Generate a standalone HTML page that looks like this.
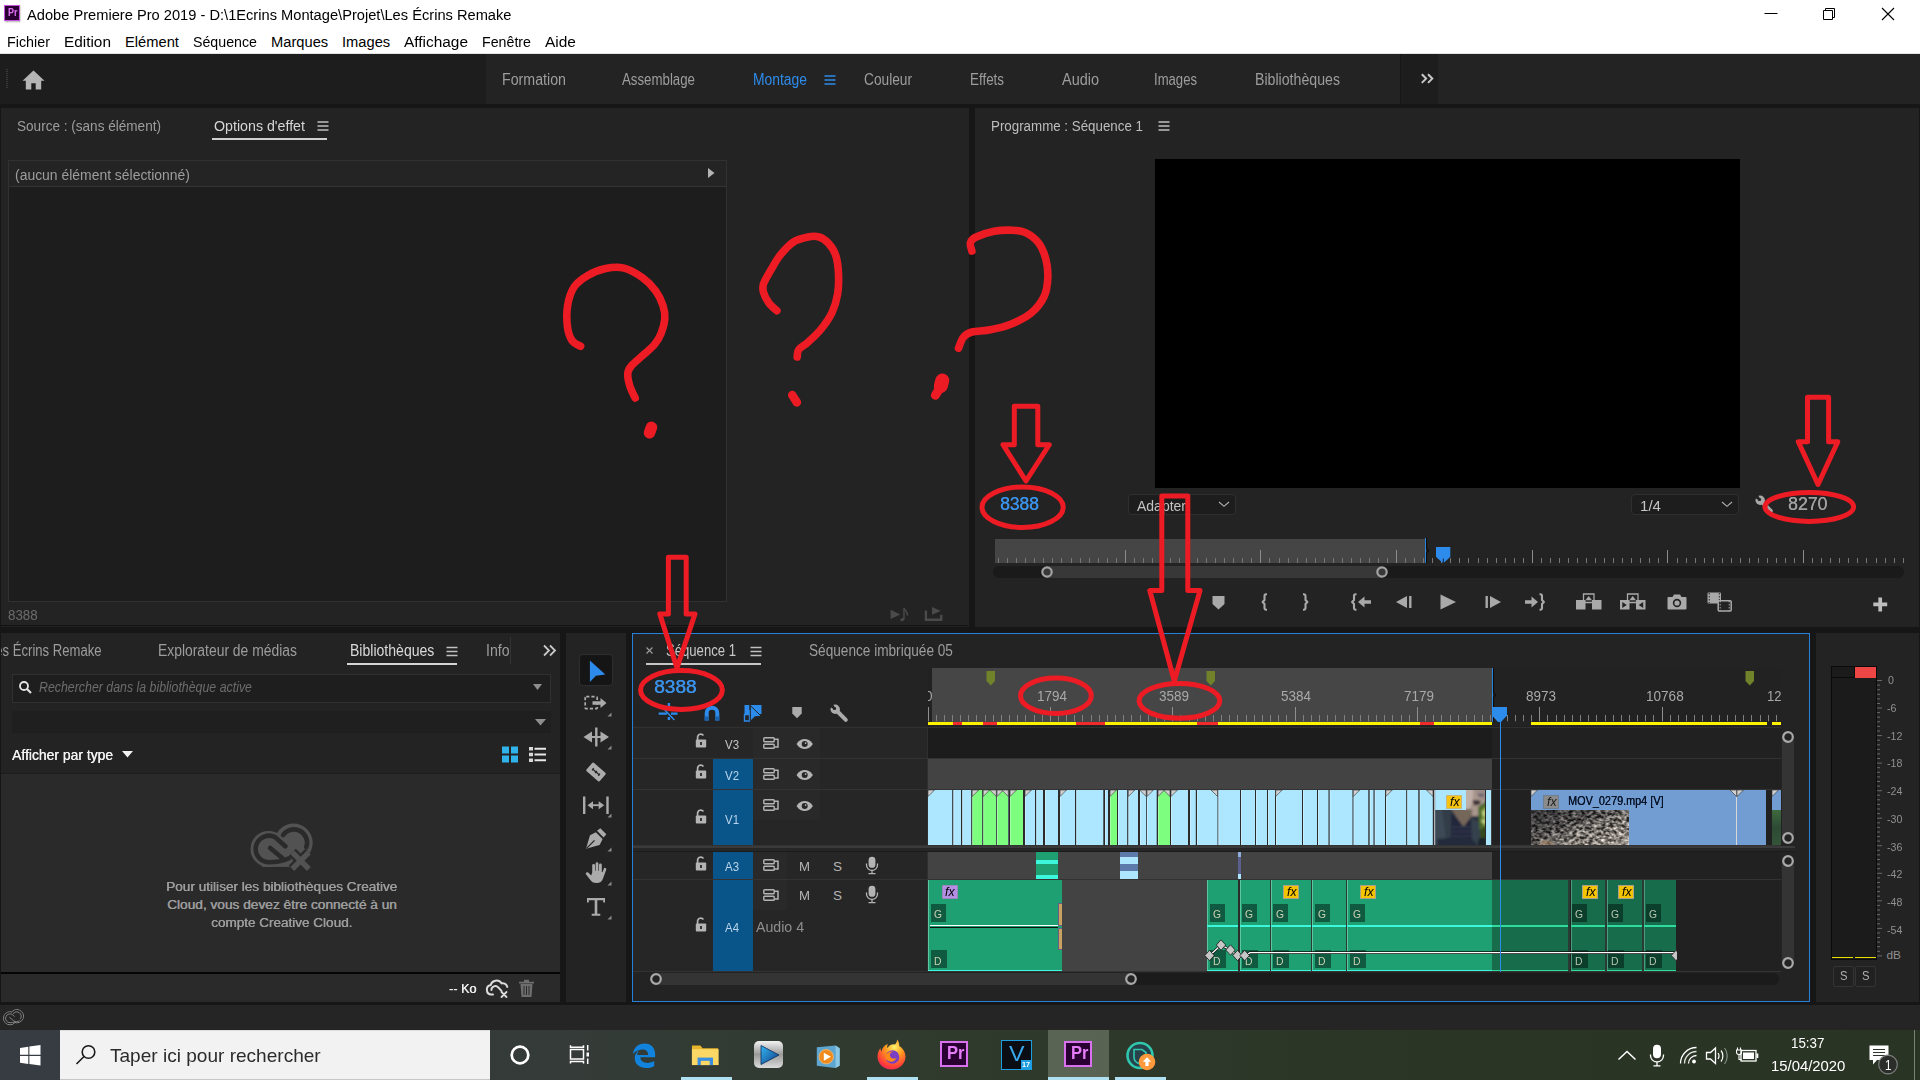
<!DOCTYPE html>
<html lang="fr"><head><meta charset="utf-8"><title>Adobe Premiere Pro 2019</title><style>
html,body{margin:0;padding:0;}
body{width:1920px;height:1080px;overflow:hidden;background:#161616;position:relative;font-family:"Liberation Sans",sans-serif;}
div,span,svg{position:absolute;box-sizing:border-box;}
.t{white-space:pre;transform-origin:0 50%;}
</style></head><body>
<div style="left:0px;top:0px;width:1920px;height:54px;background:#ffffff;"></div>
<div style="left:0px;top:53px;width:1920px;height:1px;background:#e4e4e4;"></div>
<div style="left:4px;top:5px;width:16.3px;height:15.7px;background:#2a0033;border:1px solid #c454dc;box-shadow:0.500px 1px 1.500px rgba(0,0,0,0.350);"></div>
<span class="t " style="left:7.6px;top:7.19px;font-size:11px;line-height:11px;color:#e273f7;font-weight:700;transform:scaleX(0.8177);">Pr</span>
<span class="t " style="left:27.4px;top:6.75px;font-size:15.3px;line-height:15.3px;color:#000;transform:scaleX(0.9577);">Adobe Premiere Pro 2019 - D:\1Ecrins Montage\Projet\Les Écrins Remake</span>
<span class="t " style="left:7px;top:34.56px;font-size:14.7px;line-height:14.7px;color:#000;transform:scaleX(0.9749);">Fichier</span>
<span class="t " style="left:64px;top:34.56px;font-size:14.7px;line-height:14.7px;color:#000;transform:scaleX(1.0456);">Edition</span>
<span class="t " style="left:125px;top:34.56px;font-size:14.7px;line-height:14.7px;color:#000;">Elément</span>
<span class="t " style="left:193px;top:34.56px;font-size:14.7px;line-height:14.7px;color:#000;transform:scaleX(0.9666);">Séquence</span>
<span class="t " style="left:271px;top:34.56px;font-size:14.7px;line-height:14.7px;color:#000;">Marques</span>
<span class="t " style="left:342px;top:34.56px;font-size:14.7px;line-height:14.7px;color:#000;">Images</span>
<span class="t " style="left:404px;top:34.56px;font-size:14.7px;line-height:14.7px;color:#000;transform:scaleX(1.0487);">Affichage</span>
<span class="t " style="left:482px;top:34.56px;font-size:14.7px;line-height:14.7px;color:#000;transform:scaleX(0.9672);">Fenêtre</span>
<span class="t " style="left:545px;top:34.56px;font-size:14.7px;line-height:14.7px;color:#000;transform:scaleX(1.0536);">Aide</span>
<svg style="left:1750px;top:0px;" width="170" height="30" viewBox="0 0 170 30"><path d="M14.5 13.5H27.5" stroke="#000" stroke-width="1" fill="none"/><path d="M73.5 10.5h9v9h-9z M75.5 10.5v-2h9v9h-2" stroke="#000" stroke-width="1" fill="none"/><path d="M132 8l12 12M144 8l-12 12" stroke="#000" stroke-width="1.1" fill="none"/></svg>
<div style="left:0px;top:54px;width:1920px;height:50px;background:#1d1d1d;"></div>
<div style="left:486px;top:54px;width:915px;height:50px;background:#232323;"></div>
<div style="left:1438px;top:54px;width:482px;height:50px;background:#232323;"></div>
<div style="left:1400px;top:54px;width:1px;height:50px;background:#161616;"></div>
<div style="left:6px;top:69px;width:2px;height:20px;background:repeating-linear-gradient(#3a3a3a 0 1px,transparent 1px 2px);"></div>
<svg style="left:21px;top:69px;" width="26" height="22" viewBox="0 0 26 22"><path d="M12.500 1.500L1.500 11.800H4.800V20.500H10.300V14.300H14.700V20.500H20.200V11.800H23.500Z" fill="#b4b4b4"/></svg>
<span class="t " style="left:502px;top:71.93px;font-size:15.8px;line-height:15.8px;color:#9d9d9d;transform:scaleX(0.8998);">Formation</span>
<span class="t " style="left:622px;top:71.93px;font-size:15.8px;line-height:15.8px;color:#9d9d9d;transform:scaleX(0.8396);">Assemblage</span>
<span class="t " style="left:753px;top:71.93px;font-size:15.8px;line-height:15.8px;color:#2d8ceb;transform:scaleX(0.8782);">Montage</span>
<span class="t " style="left:864px;top:71.93px;font-size:15.8px;line-height:15.8px;color:#9d9d9d;transform:scaleX(0.8675);">Couleur</span>
<span class="t " style="left:970px;top:71.93px;font-size:15.8px;line-height:15.8px;color:#9d9d9d;transform:scaleX(0.8477);">Effets</span>
<span class="t " style="left:1062px;top:71.93px;font-size:15.8px;line-height:15.8px;color:#9d9d9d;transform:scaleX(0.9156);">Audio</span>
<span class="t " style="left:1154px;top:71.93px;font-size:15.8px;line-height:15.8px;color:#9d9d9d;transform:scaleX(0.8299);">Images</span>
<span class="t " style="left:1255px;top:71.93px;font-size:15.8px;line-height:15.8px;color:#9d9d9d;transform:scaleX(0.8959);">Bibliothèques</span>
<svg style="left:824px;top:74px;" width="12" height="12" viewBox="0 0 12 12"><path d="M0.5 2H11.5M0.5 6H11.5M0.5 10H11.5" stroke="#2d8ceb" stroke-width="1.6"/></svg>
<svg style="left:1420px;top:72px;" width="16" height="14" viewBox="0 0 16 14"><path d="M1.800 2.300l4.300 4.300-4.300 4.300M8 2.300l4.300 4.300-4.300 4.300" stroke="#c8c8c8" stroke-width="2" fill="none"/></svg>
<div style="left:1px;top:108px;width:968px;height:519px;background:#232323;"></div>
<span class="t " style="left:17px;top:118.35px;font-size:15.3px;line-height:15.3px;color:#9d9d9d;transform:scaleX(0.8866);">Source : (sans élément)</span>
<span class="t " style="left:214px;top:118.35px;font-size:15.3px;line-height:15.3px;color:#d6d6d6;transform:scaleX(0.9295);">Options d&#x27;effet</span>
<svg style="left:317px;top:120px;" width="12" height="12" viewBox="0 0 12 12"><path d="M0.5 2H11.5M0.5 6H11.5M0.5 10H11.5" stroke="#c0c0c0" stroke-width="1.5"/></svg>
<div style="left:212px;top:137.5px;width:115px;height:2px;background:#d0d0d0;"></div>
<div style="left:8px;top:160px;width:719px;height:442px;background:#1d1d1d;border:1px solid #313131;"></div>
<div style="left:9px;top:161px;width:717px;height:26px;background:#242424;border-bottom:1px solid #343434;"></div>
<span class="t " style="left:15px;top:167.05px;font-size:15.3px;line-height:15.3px;color:#9d9d9d;transform:scaleX(0.9104);">(aucun élément sélectionné)</span>
<svg style="left:706px;top:166.5px;" width="10" height="12" viewBox="0 0 10 12"><path d="M2 1l6.500 5L2 11z" fill="#b4b4b4"/></svg>
<span class="t " style="left:8.3px;top:608.27px;font-size:14.8px;line-height:14.8px;color:#6c6c6c;transform:scaleX(0.9020);">8388</span>
<svg style="left:889px;top:606px;" width="22" height="16" viewBox="0 0 22 16"><path d="M1.600 3.800l9.600 4.600-9.600 4.600z" fill="#4a4a4a"/><path d="M15 2v11.500" stroke="#4a4a4a" stroke-width="1.400" fill="none"/><ellipse cx="13.300" cy="13.600" rx="2" ry="1.400" fill="#4a4a4a" transform="rotate(-20 13.300 13.600)"/><path d="M15 2.200c1 2.500 4 3.500 3.500 7.500" stroke="#4a4a4a" stroke-width="1.400" fill="none"/></svg>
<svg style="left:924px;top:606px;" width="20" height="16" viewBox="0 0 20 16"><path d="M1.900 4.500v9.300h15.300V8.800" stroke="#4a4a4a" stroke-width="2.400" fill="none"/><path d="M8 1l8.800 3.900L8 8.800z" fill="#4a4a4a"/></svg>
<div style="left:1px;top:625px;width:967px;height:1px;background:#121212;"></div>
<div style="left:975px;top:108px;width:944px;height:519px;background:#232323;"></div>
<span class="t " style="left:991px;top:118.35px;font-size:15.3px;line-height:15.3px;color:#bdbdbd;transform:scaleX(0.8718);">Programme : Séquence 1</span>
<svg style="left:1158px;top:120px;" width="12" height="12" viewBox="0 0 12 12"><path d="M0.5 2H11.5M0.5 6H11.5M0.5 10H11.5" stroke="#c0c0c0" stroke-width="1.5"/></svg>
<div style="left:1155px;top:159px;width:585px;height:329px;background:#000;"></div>
<span class="t " style="left:999.5px;top:496.09px;font-size:17.5px;line-height:17.5px;color:#3a92ea;transform:scaleX(0.9940);text-shadow:0.400px 0 0 #3a92ea;">8388</span>
<span class="t " style="left:1787.5px;top:496.09px;font-size:17.5px;line-height:17.5px;color:#a2a2a2;transform:scaleX(1.0095);text-shadow:0.300px 0 0 #a2a2a2;">8270</span>
<div style="left:1127.5px;top:493.5px;width:108.5px;height:21.5px;background:#1d1d1d;border:1px solid #2f2f2f;border-radius:4px;"></div>
<span class="t " style="left:1137px;top:497.60px;font-size:15px;line-height:15px;color:#c4c4c4;transform:scaleX(0.9326);">Adapter</span>
<svg style="left:1218px;top:499px;" width="12" height="10" viewBox="0 0 12 10"><path d="M1 3l5 4.300L11 3" stroke="#b0b0b0" stroke-width="1.100" fill="none"/></svg>
<div style="left:1630.5px;top:493.5px;width:108.5px;height:21.5px;background:#1d1d1d;border:1px solid #2f2f2f;border-radius:4px;"></div>
<span class="t " style="left:1640px;top:497.60px;font-size:15px;line-height:15px;color:#c4c4c4;transform:scaleX(1.0071);">1/4</span>
<svg style="left:1721px;top:499px;" width="12" height="10" viewBox="0 0 12 10"><path d="M1 3l5 4.300L11 3" stroke="#b0b0b0" stroke-width="1.100" fill="none"/></svg>
<svg style="left:1754px;top:494px;" width="20" height="20" viewBox="0 0 20 20"><path d="M8 8L16.800 16.800" stroke="#a8a8a8" stroke-width="4" stroke-linecap="round"/><circle cx="6.200" cy="6.200" r="4.700" fill="#a8a8a8"/><path d="M6.600 6.600L-1 3.200L3.200 -1z" fill="#232323"/><circle cx="5.400" cy="5.400" r="1.700" fill="#232323"/></svg>
<div style="left:995px;top:539px;width:430px;height:24px;background:#454545;"></div>
<svg style="left:995px;top:539px;" width="910" height="24" viewBox="0 0 910 24"><path d="M3.5 19V24" stroke="#777" stroke-width="1"/><path d="M12.5 19V24" stroke="#777" stroke-width="1"/><path d="M21.5 19V24" stroke="#777" stroke-width="1"/><path d="M30.5 19V24" stroke="#777" stroke-width="1"/><path d="M39.5 19V24" stroke="#777" stroke-width="1"/><path d="M48.5 19V24" stroke="#777" stroke-width="1"/><path d="M57.5 19V24" stroke="#777" stroke-width="1"/><path d="M66.5 19V24" stroke="#777" stroke-width="1"/><path d="M76.5 19V24" stroke="#777" stroke-width="1"/><path d="M85.5 19V24" stroke="#777" stroke-width="1"/><path d="M94.5 19V24" stroke="#777" stroke-width="1"/><path d="M103.5 19V24" stroke="#777" stroke-width="1"/><path d="M112.5 19V24" stroke="#777" stroke-width="1"/><path d="M121.5 19V24" stroke="#777" stroke-width="1"/><path d="M130.5 11V24" stroke="#8c8c8c" stroke-width="1"/><path d="M139.5 19V24" stroke="#777" stroke-width="1"/><path d="M148.5 19V24" stroke="#777" stroke-width="1"/><path d="M157.5 19V24" stroke="#777" stroke-width="1"/><path d="M166.5 19V24" stroke="#777" stroke-width="1"/><path d="M175.5 19V24" stroke="#777" stroke-width="1"/><path d="M184.5 19V24" stroke="#777" stroke-width="1"/><path d="M193.5 19V24" stroke="#777" stroke-width="1"/><path d="M202.5 19V24" stroke="#777" stroke-width="1"/><path d="M211.5 19V24" stroke="#777" stroke-width="1"/><path d="M220.5 19V24" stroke="#777" stroke-width="1"/><path d="M229.5 19V24" stroke="#777" stroke-width="1"/><path d="M238.5 19V24" stroke="#777" stroke-width="1"/><path d="M247.5 19V24" stroke="#777" stroke-width="1"/><path d="M256.5 19V24" stroke="#777" stroke-width="1"/><path d="M265.5 11V24" stroke="#8c8c8c" stroke-width="1"/><path d="M274.5 19V24" stroke="#777" stroke-width="1"/><path d="M284.5 19V24" stroke="#777" stroke-width="1"/><path d="M293.5 19V24" stroke="#777" stroke-width="1"/><path d="M302.5 19V24" stroke="#777" stroke-width="1"/><path d="M311.5 19V24" stroke="#777" stroke-width="1"/><path d="M320.5 19V24" stroke="#777" stroke-width="1"/><path d="M329.5 19V24" stroke="#777" stroke-width="1"/><path d="M338.5 19V24" stroke="#777" stroke-width="1"/><path d="M347.5 19V24" stroke="#777" stroke-width="1"/><path d="M356.5 19V24" stroke="#777" stroke-width="1"/><path d="M365.5 19V24" stroke="#777" stroke-width="1"/><path d="M374.5 19V24" stroke="#777" stroke-width="1"/><path d="M383.5 19V24" stroke="#777" stroke-width="1"/><path d="M392.5 19V24" stroke="#777" stroke-width="1"/><path d="M401.5 11V24" stroke="#8c8c8c" stroke-width="1"/><path d="M410.5 19V24" stroke="#777" stroke-width="1"/><path d="M419.5 19V24" stroke="#777" stroke-width="1"/><path d="M428.5 19V24" stroke="#777" stroke-width="1"/><path d="M437.5 19V24" stroke="#777" stroke-width="1"/><path d="M446.5 19V24" stroke="#777" stroke-width="1"/><path d="M455.5 19V24" stroke="#777" stroke-width="1"/><path d="M464.5 19V24" stroke="#777" stroke-width="1"/><path d="M473.5 19V24" stroke="#777" stroke-width="1"/><path d="M483.5 19V24" stroke="#777" stroke-width="1"/><path d="M492.5 19V24" stroke="#777" stroke-width="1"/><path d="M501.5 19V24" stroke="#777" stroke-width="1"/><path d="M510.5 19V24" stroke="#777" stroke-width="1"/><path d="M519.5 19V24" stroke="#777" stroke-width="1"/><path d="M528.5 19V24" stroke="#777" stroke-width="1"/><path d="M537.5 11V24" stroke="#8c8c8c" stroke-width="1"/><path d="M546.5 19V24" stroke="#777" stroke-width="1"/><path d="M555.5 19V24" stroke="#777" stroke-width="1"/><path d="M564.5 19V24" stroke="#777" stroke-width="1"/><path d="M573.5 19V24" stroke="#777" stroke-width="1"/><path d="M582.5 19V24" stroke="#777" stroke-width="1"/><path d="M591.5 19V24" stroke="#777" stroke-width="1"/><path d="M600.5 19V24" stroke="#777" stroke-width="1"/><path d="M609.5 19V24" stroke="#777" stroke-width="1"/><path d="M618.5 19V24" stroke="#777" stroke-width="1"/><path d="M627.5 19V24" stroke="#777" stroke-width="1"/><path d="M636.5 19V24" stroke="#777" stroke-width="1"/><path d="M645.5 19V24" stroke="#777" stroke-width="1"/><path d="M654.5 19V24" stroke="#777" stroke-width="1"/><path d="M663.5 19V24" stroke="#777" stroke-width="1"/><path d="M672.5 11V24" stroke="#8c8c8c" stroke-width="1"/><path d="M682.5 19V24" stroke="#777" stroke-width="1"/><path d="M691.5 19V24" stroke="#777" stroke-width="1"/><path d="M700.5 19V24" stroke="#777" stroke-width="1"/><path d="M709.5 19V24" stroke="#777" stroke-width="1"/><path d="M718.5 19V24" stroke="#777" stroke-width="1"/><path d="M727.5 19V24" stroke="#777" stroke-width="1"/><path d="M736.5 19V24" stroke="#777" stroke-width="1"/><path d="M745.5 19V24" stroke="#777" stroke-width="1"/><path d="M754.5 19V24" stroke="#777" stroke-width="1"/><path d="M763.5 19V24" stroke="#777" stroke-width="1"/><path d="M772.5 19V24" stroke="#777" stroke-width="1"/><path d="M781.5 19V24" stroke="#777" stroke-width="1"/><path d="M790.5 19V24" stroke="#777" stroke-width="1"/><path d="M799.5 19V24" stroke="#777" stroke-width="1"/><path d="M808.5 11V24" stroke="#8c8c8c" stroke-width="1"/><path d="M817.5 19V24" stroke="#777" stroke-width="1"/><path d="M826.5 19V24" stroke="#777" stroke-width="1"/><path d="M835.5 19V24" stroke="#777" stroke-width="1"/><path d="M844.5 19V24" stroke="#777" stroke-width="1"/><path d="M853.5 19V24" stroke="#777" stroke-width="1"/><path d="M862.5 19V24" stroke="#777" stroke-width="1"/><path d="M871.5 19V24" stroke="#777" stroke-width="1"/><path d="M881.5 19V24" stroke="#777" stroke-width="1"/><path d="M890.5 19V24" stroke="#777" stroke-width="1"/><path d="M899.5 19V24" stroke="#777" stroke-width="1"/><path d="M908.5 19V24" stroke="#777" stroke-width="1"/></svg>
<div style="left:1425px;top:538px;width:1px;height:25px;background:#2d8ceb;"></div>
<svg style="left:1425px;top:538px;" width="6" height="26" viewBox="0 0 6 26"><path d="M1.500 0V10.300L3.800 12.600L1.500 14.900V25" stroke="#0c0c0c" stroke-width="1.100" fill="none"/></svg>
<svg style="left:1435.8px;top:547px;" width="15" height="16" viewBox="0 0 15 16"><path d="M0 0h14.300v9.700l-5.800 5.600h-2.700l-5.800-5.600z" fill="#2d8ceb"/><path d="M7.300 11.500v4" stroke="#0a1e3c" stroke-width="1"/></svg>
<div style="left:993px;top:566px;width:911px;height:11.5px;background:#1a1a1a;border-radius:6px;"></div>
<div style="left:1046px;top:566px;width:336px;height:11.5px;background:#383838;"></div>
<svg style="left:1040px;top:564.7px;" width="14" height="14" viewBox="0 0 14 14"><circle cx="7" cy="7" r="4.700" fill="#383838" stroke="#a2a2a2" stroke-width="2.200"/></svg>
<svg style="left:1375.3px;top:564.7px;" width="14" height="14" viewBox="0 0 14 14"><circle cx="7" cy="7" r="4.700" fill="#383838" stroke="#a2a2a2" stroke-width="2.200"/></svg>
<svg style="left:1212px;top:596px;" width="13" height="14" viewBox="0 0 13 14"><path d="M0.500 0h12v8l-6 5.500-6-5.500z" fill="#a9a9a9"/></svg>
<svg style="left:1260px;top:593px;" width="10" height="18" viewBox="0 0 10 18"><path d="M7 1.200H6.200C4.800 1.200 4.500 1.900 4.500 3.200V7L2.600 9L4.500 11V14.800C4.500 16.100 4.800 16.800 6.200 16.800H7" stroke="#a9a9a9" stroke-width="2.100" fill="none" stroke-linejoin="round"/></svg>
<svg style="left:1300px;top:593px;" width="10" height="18" viewBox="0 0 10 18"><path d="M3 1.200H3.800C5.200 1.200 5.500 1.900 5.500 3.200V7L7.400 9L5.500 11V14.800C5.500 16.100 5.200 16.800 3.800 16.800H3" stroke="#a9a9a9" stroke-width="2.100" fill="none" stroke-linejoin="round"/></svg>
<svg style="left:1350px;top:593px;" width="22" height="18" viewBox="0 0 22 18"><path d="M6.500 1.200H5.700C4.300 1.200 4 1.900 4 3.200V7L2.100 9L4 11V14.800C4 16.100 4.300 16.800 5.700 16.800H6.500" stroke="#a9a9a9" stroke-width="2.100" fill="none" stroke-linejoin="round"/><path d="M8 9l6.500-5.500v3.700h6.500v3.600h-6.500v3.700z" fill="#a9a9a9"/></svg>
<svg style="left:1395px;top:595px;" width="18" height="14" viewBox="0 0 18 14"><path d="M1 7l11-6v12z" fill="#a9a9a9"/><path d="M15.300 1v12" stroke="#a9a9a9" stroke-width="2.400"/></svg>
<svg style="left:1439px;top:594px;" width="18" height="16" viewBox="0 0 18 16"><path d="M1.500 0.500L17 8 1.500 15.500z" fill="#a9a9a9"/></svg>
<svg style="left:1484px;top:595px;" width="18" height="14" viewBox="0 0 18 14"><path d="M17 7L6 1v12z" fill="#a9a9a9"/><path d="M2.700 1v12" stroke="#a9a9a9" stroke-width="2.400"/></svg>
<svg style="left:1524px;top:593px;" width="22" height="18" viewBox="0 0 22 18"><path d="M15.500 1.200H16.300C17.700 1.200 18 1.900 18 3.200V7L19.900 9L18 11V14.800C18 16.100 17.700 16.800 16.300 16.800H15.500" stroke="#a9a9a9" stroke-width="2.100" fill="none" stroke-linejoin="round"/><path d="M14 9L7.500 3.500v3.700H1v3.600h6.500v3.700z" fill="#a9a9a9"/></svg>
<svg style="left:1576px;top:593px;" width="26" height="17" viewBox="0 0 26 17"><path d="M0 7h9.500v9.500H0zM16 7h9.500v9.500H16z" fill="#a9a9a9"/><path d="M7.500 1h10.500v8.500H7.500z" fill="none" stroke="#a9a9a9" stroke-width="1.300"/><path d="M12.700 3l3.300 4.200H9.400z" fill="#a9a9a9"/></svg>
<svg style="left:1620px;top:593px;" width="26" height="17" viewBox="0 0 26 17"><path d="M0 7h9.500v9.500H0zM16 7h9.500v9.500H16z" fill="#a9a9a9"/><path d="M7.500 1h10.500v8.500H7.500z" fill="none" stroke="#a9a9a9" stroke-width="1.300"/><path d="M12.700 3l3.300 4.200H9.400z" fill="#a9a9a9"/><path d="M2.300 9l4.500 3-4.500 3zM23.200 9l-4.500 3 4.500 3z" fill="#232323"/></svg>
<svg style="left:1667px;top:594px;" width="20" height="16" viewBox="0 0 20 16"><path d="M1.500 3h4l1.500-2.500h6L14.500 3h4a1 1 0 0 1 1 1v10.500a1 1 0 0 1-1 1h-17a1 1 0 0 1-1-1V4a1 1 0 0 1 1-1z" fill="#a9a9a9"/><circle cx="10" cy="9" r="3.400" fill="none" stroke="#232323" stroke-width="1.600"/></svg>
<svg style="left:1707px;top:592px;" width="26" height="20" viewBox="0 0 26 20"><rect x="0.500" y="0.500" width="13.500" height="11" rx="1" fill="#a9a9a9"/><path d="M2.200 1v10M12.300 1v10" stroke="#232323" stroke-width="1" stroke-dasharray="1.500 1.500"/><rect x="11.200" y="8.700" width="13" height="10.300" rx="1" fill="#232323" stroke="#a9a9a9" stroke-width="1.500"/><path d="M13.200 9v10M22.200 9v10" stroke="#a9a9a9" stroke-width="1" stroke-dasharray="1.500 1.500"/></svg>
<svg style="left:1873px;top:597px;" width="15" height="15" viewBox="0 0 15 15"><path d="M7.200 0.400v14.100M0.300 7.400h13.900" stroke="#bdbdbd" stroke-width="3.700"/></svg>
<div style="left:1px;top:633px;width:559px;height:369px;background:#232323;"></div>
<div style="left:1px;top:774px;width:559px;height:228px;background:#2a2a2a;"></div>
<div style="left:1px;top:773px;width:559px;height:1px;background:#1c1c1c;"></div>
<div style="left:1px;top:972px;width:559px;height:2.4px;background:#050505;"></div>
<div style="left:1.400px;top:640px;width:120px;height:24px;overflow:hidden">
<span class="t " style="left:-12.970622286541238px;top:2.99px;font-size:15.6px;line-height:15.6px;color:#9d9d9d;transform:scaleX(0.8397);">Les Écrins Remake</span>
</div>
<span class="t " style="left:158px;top:642.99px;font-size:15.6px;line-height:15.6px;color:#9d9d9d;transform:scaleX(0.8905);">Explorateur de médias</span>
<span class="t " style="left:350.3px;top:642.99px;font-size:15.6px;line-height:15.6px;color:#dadada;transform:scaleX(0.9010);">Bibliothèques</span>
<svg style="left:446px;top:645px;" width="12" height="12" viewBox="0 0 12 12"><path d="M0.5 2.5H11.5M0.5 6.500H11.5M0.5 10.500H11.5" stroke="#c0c0c0" stroke-width="1.5"/></svg>
<div style="left:347px;top:662.5px;width:110px;height:2.5px;background:#d4d4d4;"></div>
<span class="t " style="left:486.3px;top:642.99px;font-size:15.6px;line-height:15.6px;color:#9d9d9d;transform:scaleX(0.9031);">Info</span>
<div style="left:510px;top:637px;width:1px;height:27px;background:#343434;"></div>
<svg style="left:542px;top:644px;" width="15" height="13" viewBox="0 0 15 13"><path d="M2 1.500l5 5-5 5M8 1.500l5 5-5 5" stroke="#c8c8c8" stroke-width="1.800" fill="none"/></svg>
<div style="left:12px;top:674px;width:539px;height:29px;background:#1e1e1e;border:1px solid #303030;"></div>
<svg style="left:18px;top:680px;" width="15" height="15" viewBox="0 0 15 15"><circle cx="6" cy="6" r="4" fill="none" stroke="#e4e4e4" stroke-width="1.800"/><path d="M9 9l4 4" stroke="#e4e4e4" stroke-width="2.200"/></svg>
<span class="t " style="left:39px;top:681.22px;font-size:13.8px;line-height:13.8px;color:#6c6c6c;font-style:italic;transform:scaleX(0.8956);">Rechercher dans la bibliothèque active</span>
<svg style="left:532px;top:683px;" width="11" height="8" viewBox="0 0 11 8"><path d="M1 1h9L5.500 7z" fill="#8e8e8e"/></svg>
<div style="left:12px;top:711px;width:539px;height:22px;background:#1f1f1f;"></div>
<svg style="left:534px;top:718px;" width="13" height="8" viewBox="0 0 13 8"><path d="M1 1h11L6.500 7.500z" fill="#8e8e8e"/></svg>
<span class="t " style="left:12px;top:747.00px;font-size:15px;line-height:15px;color:#f2f2f2;transform:scaleX(0.9270);text-shadow:0.350px 0 0 #f2f2f2;">Afficher par type</span>
<svg style="left:121px;top:750px;" width="13" height="8" viewBox="0 0 13 8"><path d="M1 1h11L6.500 7.500z" fill="#f2f2f2"/></svg>
<svg style="left:501px;top:746px;" width="18" height="17" viewBox="0 0 18 17"><path d="M1 0.500h7v7H1zM10 0.500h7v7h-7zM1 9.500h7v7H1zM10 9.500h7v7h-7z" fill="#2fb3ea"/></svg>
<svg style="left:528px;top:746px;" width="19" height="17" viewBox="0 0 19 17"><path d="M1 1h4v3.500H1zM1 6.800h4v3.500H1zM1 12.600h4v3.500H1z" fill="#d8d8d8"/><path d="M6.500 2.700H18M6.500 8.500H18M6.500 14.300H18" stroke="#e8e8e8" stroke-width="2"/></svg>
<svg style="left:248px;top:820px;" width="70" height="56" viewBox="0 0 70 56"><g transform="translate(-248,-820)"><circle cx="268.500" cy="849" r="18" fill="#525252"/><circle cx="293.500" cy="842.800" r="19.200" fill="#525252"/><path d="M262 866.900h32v-8h-32z" fill="#525252"/><g fill="none" stroke="#2a2a2a" stroke-width="4.600" stroke-linecap="round"><path d="M285.300 846.300L275.300 837.300A13.300 13.300 0 1 0 268.500 862.300C276 862.300 282 861.500 288.500 858.500"/><path d="M270.200 848L282.500 858.200"/><path d="M283.100 835A13.200 13.200 0 0 1 306.300 847.100"/></g><path d="M292.300 852.400l16.600 16.600M308.900 852.400l-16.600 16.600" stroke="#2a2a2a" stroke-width="10" fill="none"/><path d="M292.300 852.400l16.600 16.600M308.900 852.400l-16.600 16.600" stroke="#525252" stroke-width="5.400" fill="none"/></g></svg>
<span class="t " style="left:165.9px;top:880.20px;font-size:13.7px;line-height:13.7px;color:#9c9c9c;transform:scaleX(0.9930);text-shadow:0.500px 0 0 #9c9c9c;">Pour utiliser les bibliothèques Creative</span>
<span class="t " style="left:166.9px;top:898.10px;font-size:13.7px;line-height:13.7px;color:#9c9c9c;text-shadow:0.500px 0 0 #9c9c9c;">Cloud, vous devez être connecté à un</span>
<span class="t " style="left:210.8px;top:916.10px;font-size:13.7px;line-height:13.7px;color:#9c9c9c;transform:scaleX(0.9870);text-shadow:0.500px 0 0 #9c9c9c;">compte Creative Cloud.</span>
<span class="t " style="left:449px;top:982.00px;font-size:13px;line-height:13px;color:#ececec;transform:scaleX(0.9726);text-shadow:0.300px 0 0 #ececec;">-- Ko</span>
<svg style="left:485px;top:979px;" width="25" height="20" viewBox="0 0 25 20"><g fill="none" stroke="#dcdcdc" stroke-width="2" stroke-linecap="round"><path d="M8 15.500H6.500a4.800 4.800 0 0 1-.8-9.500a6 6 0 0 1 10.800-1.700a5 5 0 0 1 5.800 3.600"/><path d="M6.400 11c0-3.600 4.400-5.200 6.800-2.600l3.300 3.500"/><path d="M16.500 13l5 5M21.500 13l-5 5" stroke-width="1.800"/></g></svg>
<svg style="left:518px;top:979px;" width="17" height="19" viewBox="0 0 17 19"><path d="M2.500 5h12l-1 13h-10zM1 2.800h15v1.700H1zM6 0.800h5v2H6z" fill="#6e6e6e"/><path d="M6 7v9M8.500 7v9M11 7v9" stroke="#2a2a2a" stroke-width="1"/></svg>
<div style="left:566px;top:633px;width:60px;height:369px;background:#232323;"></div>
<div style="left:579px;top:654px;width:34px;height:32px;background:#151515;border:1px solid #2e2e2e;border-radius:4px;"></div>
<svg style="left:588px;top:659px;" width="20" height="25" viewBox="0 0 20 25"><path d="M1.900 1.500L17.300 15.400 7.900 16.800 1.900 23z" fill="#2d8ceb"/></svg>
<svg style="left:584px;top:695px;" width="24" height="16" viewBox="0 0 24 16"><rect x="1.200" y="1.700" width="12" height="12" rx="1" fill="none" stroke="#ababab" stroke-width="1.700" stroke-dasharray="3.200 2"/><path d="M8.500 6.300h8V3l6 5-6 5V9.700h-8z" fill="#ababab"/></svg>
<svg style="left:607px;top:712px;" width="5" height="5" viewBox="0 0 5 5"><path d="M4.500 0.500v4h-4z" fill="#8a8a8a"/></svg>
<svg style="left:583px;top:727px;" width="27" height="20" viewBox="0 0 27 20"><path d="M13.300 0.500v19" stroke="#ababab" stroke-width="2.400"/><path d="M0.500 10l8.500-5.500v11zM26 10l-8.500-5.500v11z" fill="#ababab"/><path d="M8 10h11" stroke="#ababab" stroke-width="2"/></svg>
<svg style="left:607px;top:745px;" width="5" height="5" viewBox="0 0 5 5"><path d="M4.500 0.500v4h-4z" fill="#8a8a8a"/></svg>
<svg style="left:584px;top:760px;" width="24" height="24" viewBox="0 0 24 24"><g transform="rotate(41 12 12)"><rect x="3.200" y="6.500" width="17.600" height="11" rx="1.200" fill="#ababab"/><path d="M7 12h10" stroke="#232323" stroke-width="1.200"/><path d="M8 10.500v3M12 10.500v3M16 10.500v3" stroke="#232323" stroke-width="1"/></g></svg>
<svg style="left:582px;top:796px;" width="28" height="19" viewBox="0 0 28 19"><path d="M2.200 0.500v17.500M25.500 0.500v17.500" stroke="#ababab" stroke-width="2.400"/><path d="M5.500 9.200l5.500-4v8zM22.200 9.200l-5.500-4v8z" fill="#ababab"/><path d="M10 9.200h8" stroke="#ababab" stroke-width="1.800"/></svg>
<svg style="left:607px;top:813px;" width="5" height="5" viewBox="0 0 5 5"><path d="M4.500 0.500v4h-4z" fill="#8a8a8a"/></svg>
<svg style="left:585px;top:828px;" width="22" height="22" viewBox="0 0 22 22"><path d="M12 2.800l3.300-2.600 6 6-2.600 3.300z" fill="#ababab"/><path d="M10.800 4.300l6.800 6.800-3 5.800L1 20.800 5 7.300z" fill="#ababab"/><path d="M1.500 20.300l8-8" stroke="#232323" stroke-width="1.200"/></svg>
<svg style="left:607px;top:847px;" width="5" height="5" viewBox="0 0 5 5"><path d="M4.500 0.500v4h-4z" fill="#8a8a8a"/></svg>
<svg style="left:585px;top:862px;" width="22" height="22" viewBox="0 0 22 22"><path d="M7.200 10.500V3.300a1.400 1.400 0 0 1 2.800 0v5.500l.6 0V1.700a1.400 1.400 0 0 1 2.800 0v7l.6 0V3a1.400 1.400 0 0 1 2.800 0v7l.7.200 1.300-3.500a1.300 1.300 0 0 1 2.500.900L18 16.500c-1 3-3 4.500-6.500 4.500-3 0-5-1-6.500-3.500L.9 12.300a1.500 1.500 0 0 1 2.300-1.800l3 3z" fill="#ababab"/></svg>
<svg style="left:607px;top:881px;" width="5" height="5" viewBox="0 0 5 5"><path d="M4.500 0.500v4h-4z" fill="#8a8a8a"/></svg>
<svg style="left:586px;top:897px;" width="20" height="20" viewBox="0 0 20 20"><path d="M1 1h18v4.500h-1.800V3.200H11.300v13.600h3v2H5.700v-2h3V3.200H2.800v2.300H1z" fill="#ababab"/></svg>
<svg style="left:607px;top:915px;" width="5" height="5" viewBox="0 0 5 5"><path d="M4.500 0.500v4h-4z" fill="#8a8a8a"/></svg>
<div style="left:632px;top:633px;width:1178px;height:369px;background:#232323;border:1px solid #2680d9;"></div>
<svg style="left:645px;top:646px;" width="9" height="9" viewBox="0 0 9 9"><path d="M1.500 1.500l6 6M7.500 1.500l-6 6" stroke="#9a9a9a" stroke-width="1.200"/></svg>
<span class="t " style="left:666px;top:642.99px;font-size:15.6px;line-height:15.6px;color:#c8c8c8;transform:scaleX(0.8406);">Séquence 1</span>
<svg style="left:750px;top:645px;" width="12" height="12" viewBox="0 0 12 12"><path d="M0.5 2.5H11.5M0.5 6.500H11.5M0.5 10.500H11.5" stroke="#c0c0c0" stroke-width="1.5"/></svg>
<div style="left:646px;top:663px;width:115px;height:2px;background:#c6c6c6;"></div>
<span class="t " style="left:809px;top:642.99px;font-size:15.6px;line-height:15.6px;color:#9d9d9d;transform:scaleX(0.8738);">Séquence imbriquée 05</span>
<span class="t " style="left:654.3px;top:677.76px;font-size:18px;line-height:18px;color:#3a92ea;transform:scaleX(1.0613);text-shadow:0.400px 0 0 #3a92ea;">8388</span>
<svg style="left:658px;top:702px;" width="21" height="20" viewBox="0 0 21 20"><path d="M10.900 1V6.700M10.900 14.900V18M0.700 11.600H8.900M13 11.600H19.500" stroke="#2d8ceb" stroke-width="2.400"/><path d="M3.900 4.900L16.400 18" stroke="#2d8ceb" stroke-width="1.500"/></svg>
<svg style="left:704px;top:705px;" width="16" height="16" viewBox="0 0 16 16"><path d="M2.700 15.500V8a5.300 5.300 0 0 1 10.600 0v7.500" stroke="#2d8ceb" stroke-width="4" fill="none"/><path d="M0.700 11.500h4v4h-4zM11.300 11.500h4v4h-4z" fill="#1b62ad"/></svg>
<svg style="left:743px;top:704px;" width="20" height="18" viewBox="0 0 20 18"><path d="M1.500 1h17v9h-17z" fill="#2d8ceb"/><path d="M1.500 10.500h5v6.500h-5z" fill="none" stroke="#2d8ceb" stroke-width="1.400"/><path d="M7 0.500v5.500" stroke="#232323" stroke-width="1.300"/><path d="M7.300 1.500L18.300 12.300 11.800 12.900 7.300 17.300z" fill="#2d8ceb" stroke="#232323" stroke-width="1"/></svg>
<svg style="left:792px;top:707px;" width="10" height="12" viewBox="0 0 10 12"><path d="M0.300 0h9.400v6.500l-4.700 4.700-4.700-4.700z" fill="#ababab"/></svg>
<svg style="left:829px;top:703px;" width="20" height="20" viewBox="0 0 20 20"><path d="M8 8L16.800 16.800" stroke="#ababab" stroke-width="4" stroke-linecap="round"/><circle cx="6.200" cy="6.200" r="4.700" fill="#ababab"/><path d="M6.600 6.600L-1 3.200L3.200 -1z" fill="#232323"/><circle cx="5.400" cy="5.400" r="1.700" fill="#232323"/></svg>
<div style="left:928px;top:668px;width:853px;height:54px;background:#222;"></div>
<div style="left:932px;top:668px;width:560px;height:54px;background:#464646;"></div>
<svg style="left:928px;top:668px;" width="853" height="54" viewBox="0 0 853 54"><path d="M0.5 39V53.300" stroke="#8e8e8e" stroke-width="1"/><path d="M8.5 47V53.300" stroke="#808080" stroke-width="1"/><path d="M16.5 47V53.300" stroke="#808080" stroke-width="1"/><path d="M24.5 47V53.300" stroke="#808080" stroke-width="1"/><path d="M32.5 47V53.300" stroke="#808080" stroke-width="1"/><path d="M40.5 47V53.300" stroke="#808080" stroke-width="1"/><path d="M48.5 47V53.300" stroke="#808080" stroke-width="1"/><path d="M57.5 47V53.300" stroke="#808080" stroke-width="1"/><path d="M65.5 47V53.300" stroke="#808080" stroke-width="1"/><path d="M73.5 47V53.300" stroke="#808080" stroke-width="1"/><path d="M81.5 47V53.300" stroke="#808080" stroke-width="1"/><path d="M89.5 47V53.300" stroke="#808080" stroke-width="1"/><path d="M97.5 47V53.300" stroke="#808080" stroke-width="1"/><path d="M106.5 47V53.300" stroke="#808080" stroke-width="1"/><path d="M114.5 47V53.300" stroke="#808080" stroke-width="1"/><path d="M122.5 39V53.300" stroke="#8e8e8e" stroke-width="1"/><path d="M130.5 47V53.300" stroke="#808080" stroke-width="1"/><path d="M138.5 47V53.300" stroke="#808080" stroke-width="1"/><path d="M146.5 47V53.300" stroke="#808080" stroke-width="1"/><path d="M154.5 47V53.300" stroke="#808080" stroke-width="1"/><path d="M163.5 47V53.300" stroke="#808080" stroke-width="1"/><path d="M171.5 47V53.300" stroke="#808080" stroke-width="1"/><path d="M179.5 47V53.300" stroke="#808080" stroke-width="1"/><path d="M187.5 47V53.300" stroke="#808080" stroke-width="1"/><path d="M195.5 47V53.300" stroke="#808080" stroke-width="1"/><path d="M203.5 47V53.300" stroke="#808080" stroke-width="1"/><path d="M212.5 47V53.300" stroke="#808080" stroke-width="1"/><path d="M220.5 47V53.300" stroke="#808080" stroke-width="1"/><path d="M228.5 47V53.300" stroke="#808080" stroke-width="1"/><path d="M236.5 47V53.300" stroke="#808080" stroke-width="1"/><path d="M244.5 39V53.300" stroke="#8e8e8e" stroke-width="1"/><path d="M252.5 47V53.300" stroke="#808080" stroke-width="1"/><path d="M261.5 47V53.300" stroke="#808080" stroke-width="1"/><path d="M269.5 47V53.300" stroke="#808080" stroke-width="1"/><path d="M277.5 47V53.300" stroke="#808080" stroke-width="1"/><path d="M285.5 47V53.300" stroke="#808080" stroke-width="1"/><path d="M293.5 47V53.300" stroke="#808080" stroke-width="1"/><path d="M301.5 47V53.300" stroke="#808080" stroke-width="1"/><path d="M309.5 47V53.300" stroke="#808080" stroke-width="1"/><path d="M318.5 47V53.300" stroke="#808080" stroke-width="1"/><path d="M326.5 47V53.300" stroke="#808080" stroke-width="1"/><path d="M334.5 47V53.300" stroke="#808080" stroke-width="1"/><path d="M342.5 47V53.300" stroke="#808080" stroke-width="1"/><path d="M350.5 47V53.300" stroke="#808080" stroke-width="1"/><path d="M358.5 47V53.300" stroke="#808080" stroke-width="1"/><path d="M367.5 39V53.300" stroke="#8e8e8e" stroke-width="1"/><path d="M375.5 47V53.300" stroke="#808080" stroke-width="1"/><path d="M383.5 47V53.300" stroke="#808080" stroke-width="1"/><path d="M391.5 47V53.300" stroke="#808080" stroke-width="1"/><path d="M399.5 47V53.300" stroke="#808080" stroke-width="1"/><path d="M407.5 47V53.300" stroke="#808080" stroke-width="1"/><path d="M416.5 47V53.300" stroke="#808080" stroke-width="1"/><path d="M424.5 47V53.300" stroke="#808080" stroke-width="1"/><path d="M432.5 47V53.300" stroke="#808080" stroke-width="1"/><path d="M440.5 47V53.300" stroke="#808080" stroke-width="1"/><path d="M448.5 47V53.300" stroke="#808080" stroke-width="1"/><path d="M456.5 47V53.300" stroke="#808080" stroke-width="1"/><path d="M464.5 47V53.300" stroke="#808080" stroke-width="1"/><path d="M473.5 47V53.300" stroke="#808080" stroke-width="1"/><path d="M481.5 47V53.300" stroke="#808080" stroke-width="1"/><path d="M489.5 39V53.300" stroke="#8e8e8e" stroke-width="1"/><path d="M497.5 47V53.300" stroke="#808080" stroke-width="1"/><path d="M505.5 47V53.300" stroke="#808080" stroke-width="1"/><path d="M513.5 47V53.300" stroke="#808080" stroke-width="1"/><path d="M522.5 47V53.300" stroke="#808080" stroke-width="1"/><path d="M530.5 47V53.300" stroke="#808080" stroke-width="1"/><path d="M538.5 47V53.300" stroke="#808080" stroke-width="1"/><path d="M546.5 47V53.300" stroke="#808080" stroke-width="1"/><path d="M554.5 47V53.300" stroke="#808080" stroke-width="1"/><path d="M562.5 47V53.300" stroke="#808080" stroke-width="1"/><path d="M570.5 47V53.300" stroke="#808080" stroke-width="1"/><path d="M579.5 47V53.300" stroke="#808080" stroke-width="1"/><path d="M587.5 47V53.300" stroke="#808080" stroke-width="1"/><path d="M595.5 47V53.300" stroke="#808080" stroke-width="1"/><path d="M603.5 47V53.300" stroke="#808080" stroke-width="1"/><path d="M611.5 39V53.300" stroke="#8e8e8e" stroke-width="1"/><path d="M619.5 47V53.300" stroke="#808080" stroke-width="1"/><path d="M628.5 47V53.300" stroke="#808080" stroke-width="1"/><path d="M636.5 47V53.300" stroke="#808080" stroke-width="1"/><path d="M644.5 47V53.300" stroke="#808080" stroke-width="1"/><path d="M652.5 47V53.300" stroke="#808080" stroke-width="1"/><path d="M660.5 47V53.300" stroke="#808080" stroke-width="1"/><path d="M668.5 47V53.300" stroke="#808080" stroke-width="1"/><path d="M677.5 47V53.300" stroke="#808080" stroke-width="1"/><path d="M685.5 47V53.300" stroke="#808080" stroke-width="1"/><path d="M693.5 47V53.300" stroke="#808080" stroke-width="1"/><path d="M701.5 47V53.300" stroke="#808080" stroke-width="1"/><path d="M709.5 47V53.300" stroke="#808080" stroke-width="1"/><path d="M717.5 47V53.300" stroke="#808080" stroke-width="1"/><path d="M725.5 47V53.300" stroke="#808080" stroke-width="1"/><path d="M734.5 39V53.300" stroke="#8e8e8e" stroke-width="1"/><path d="M742.5 47V53.300" stroke="#808080" stroke-width="1"/><path d="M750.5 47V53.300" stroke="#808080" stroke-width="1"/><path d="M758.5 47V53.300" stroke="#808080" stroke-width="1"/><path d="M766.5 47V53.300" stroke="#808080" stroke-width="1"/><path d="M774.5 47V53.300" stroke="#808080" stroke-width="1"/><path d="M783.5 47V53.300" stroke="#808080" stroke-width="1"/><path d="M791.5 47V53.300" stroke="#808080" stroke-width="1"/><path d="M799.5 47V53.300" stroke="#808080" stroke-width="1"/><path d="M807.5 47V53.300" stroke="#808080" stroke-width="1"/><path d="M815.5 47V53.300" stroke="#808080" stroke-width="1"/><path d="M823.5 47V53.300" stroke="#808080" stroke-width="1"/><path d="M832.5 47V53.300" stroke="#808080" stroke-width="1"/><path d="M840.5 47V53.300" stroke="#808080" stroke-width="1"/><path d="M848.5 47V53.300" stroke="#808080" stroke-width="1"/></svg>
<span class="t " style="left:1036.5px;top:688.97px;font-size:14.8px;line-height:14.8px;color:#a9a9a9;transform:scaleX(0.9112);">1794</span>
<span class="t " style="left:1158.7px;top:688.97px;font-size:14.8px;line-height:14.8px;color:#a9a9a9;transform:scaleX(0.9112);">3589</span>
<span class="t " style="left:1281.0px;top:688.97px;font-size:14.8px;line-height:14.8px;color:#a9a9a9;transform:scaleX(0.9112);">5384</span>
<span class="t " style="left:1404.0px;top:688.97px;font-size:14.8px;line-height:14.8px;color:#a9a9a9;transform:scaleX(0.9112);">7179</span>
<span class="t " style="left:1526.0px;top:688.97px;font-size:14.8px;line-height:14.8px;color:#a9a9a9;transform:scaleX(0.9112);">8973</span>
<span class="t " style="left:1645.65px;top:688.97px;font-size:14.8px;line-height:14.8px;color:#a9a9a9;transform:scaleX(0.9160);">10768</span>
<div style="left:928px;top:685px;width:20px;height:22px;overflow:hidden">
<span class="t " style="left:-2.7px;top:3.97px;font-size:14.8px;line-height:14.8px;color:#a9a9a9;transform:scaleX(0.9112);">0</span>
</div>
<span class="t " style="left:1767px;top:688.97px;font-size:14.8px;line-height:14.8px;color:#a9a9a9;transform:scaleX(0.8808);">12</span>
<svg style="left:986px;top:671px;" width="10" height="15" viewBox="0 0 10 15"><path d="M0.500 0h8.500v10l-4.200 4.500-4.300-4.500z" fill="#70822a"/></svg>
<svg style="left:1206px;top:671px;" width="10" height="15" viewBox="0 0 10 15"><path d="M0.500 0h8.500v10l-4.200 4.500-4.300-4.500z" fill="#70822a"/></svg>
<svg style="left:1744.5px;top:671px;" width="10" height="15" viewBox="0 0 10 15"><path d="M0.500 0h8.500v10l-4.200 4.500-4.300-4.500z" fill="#70822a"/></svg>
<div style="left:928px;top:722px;width:564px;height:3.3px;background:#fff200;"></div>
<div style="left:1531px;top:722px;width:236px;height:3.3px;background:#fff200;"></div>
<div style="left:1772px;top:722px;width:9px;height:3.3px;background:#fff200;"></div>
<div style="left:953px;top:722px;width:9px;height:3.3px;background:#ef2b2b;"></div>
<div style="left:983px;top:722px;width:14px;height:3.3px;background:#ef2b2b;"></div>
<div style="left:1076px;top:722px;width:29px;height:3.3px;background:#ef2b2b;"></div>
<div style="left:1197px;top:722px;width:21px;height:3.3px;background:#ef2b2b;"></div>
<div style="left:1420px;top:722px;width:14px;height:3.3px;background:#ef2b2b;"></div>
<div style="left:1492px;top:668px;width:1px;height:54px;background:#2d8ceb;"></div>
<svg style="left:1492px;top:668px;" width="6" height="54" viewBox="0 0 6 54"><path d="M1.500 0V24.500L3.600 27L1.500 29.500V54" stroke="#0c0c0c" stroke-width="1.100" fill="none"/></svg>
<div style="left:633px;top:726px;width:295px;height:246px;background:#262626;"></div>
<div style="left:928px;top:726px;width:853px;height:246px;background:#212121;"></div>
<div style="left:633px;top:726.7px;width:1148px;height:1px;background:#303030;"></div>
<div style="left:927px;top:727px;width:1px;height:245px;background:#303030;"></div>
<div style="left:928px;top:728px;width:564px;height:30px;background:#1c1c1c;"></div>
<div style="left:633px;top:758px;width:1148px;height:1px;background:#333333;"></div>
<div style="left:753px;top:728px;width:67px;height:30px;background:#292929;"></div>
<div style="left:928px;top:759px;width:564px;height:30px;background:#434343;"></div>
<div style="left:633px;top:789px;width:1148px;height:1px;background:#333333;"></div>
<div style="left:753px;top:759px;width:67px;height:30px;background:#292929;"></div>
<div style="left:713px;top:759px;width:40px;height:30px;background:#09558a;"></div>
<div style="left:928px;top:790px;width:564px;height:55px;background:#434343;"></div>
<div style="left:633px;top:845px;width:1148px;height:1px;background:#333333;"></div>
<div style="left:753px;top:790px;width:67px;height:30px;background:#292929;"></div>
<div style="left:713px;top:790px;width:40px;height:55px;background:#09558a;"></div>
<div style="left:928px;top:852px;width:564px;height:27px;background:#434343;"></div>
<div style="left:633px;top:879px;width:1148px;height:1px;background:#333333;"></div>
<div style="left:753px;top:852px;width:34px;height:27px;background:#292929;"></div>
<div style="left:713px;top:852px;width:40px;height:27px;background:#09558a;"></div>
<div style="left:928px;top:880px;width:564px;height:91px;background:#434343;"></div>
<div style="left:633px;top:971px;width:1148px;height:1px;background:#333333;"></div>
<div style="left:753px;top:880px;width:34px;height:30px;background:#292929;"></div>
<div style="left:713px;top:880px;width:40px;height:91px;background:#09558a;"></div>
<div style="left:633px;top:846px;width:1162px;height:5.5px;background:#262626;"></div>
<div style="left:633px;top:846px;width:1162px;height:2px;background:#3a3a3a;"></div>
<div style="left:633px;top:851px;width:1162px;height:1px;background:#1c1c1c;"></div>
<svg style="left:695.3px;top:733.3px;" width="12" height="15" viewBox="0 0 12 15"><path d="M2.600 7V4.300a3.200 3.200 0 0 1 5.800-1.800" stroke="#b4b4b4" stroke-width="1.700" fill="none"/><rect x="0.800" y="6.500" width="10.400" height="8" rx="1" fill="#b4b4b4"/><path d="M6 9v3" stroke="#262626" stroke-width="1.800"/></svg>
<span class="t " style="left:724.5px;top:738.89px;font-size:12.3px;line-height:12.3px;color:#c4c4c4;transform:scaleX(0.9305);">V3</span>
<svg style="left:763px;top:736.5px;" width="17" height="13" viewBox="0 0 17 13"><rect x="0.800" y="0.800" width="10.400" height="4" rx="0.800" fill="none" stroke="#b4b4b4" stroke-width="1.400"/><rect x="0.800" y="7.200" width="10.400" height="4" rx="0.800" fill="none" stroke="#b4b4b4" stroke-width="1.400"/><path d="M11.400 2.200h3.600v7.800h-3.600" fill="none" stroke="#b4b4b4" stroke-width="1.500"/></svg>
<svg style="left:796px;top:737.5px;" width="18" height="12" viewBox="0 0 18 12"><path d="M0.500 6C3 2.200 6 1 8.700 1s5.700 1.200 8.200 5C14.400 9.800 11.400 11 8.700 11S3 9.800 0.500 6z" fill="#b4b4b4"/><circle cx="8.700" cy="6" r="3" fill="#262626"/><circle cx="9.600" cy="5.100" r="0.900" fill="#b4b4b4"/></svg>
<svg style="left:695.3px;top:764.3px;" width="12" height="15" viewBox="0 0 12 15"><path d="M2.600 7V4.300a3.200 3.200 0 0 1 5.800-1.800" stroke="#b4b4b4" stroke-width="1.700" fill="none"/><rect x="0.800" y="6.500" width="10.400" height="8" rx="1" fill="#b4b4b4"/><path d="M6 9v3" stroke="#262626" stroke-width="1.800"/></svg>
<span class="t " style="left:724.5px;top:769.89px;font-size:12.3px;line-height:12.3px;color:#b9d4ea;transform:scaleX(0.9305);">V2</span>
<svg style="left:763px;top:767.5px;" width="17" height="13" viewBox="0 0 17 13"><rect x="0.800" y="0.800" width="10.400" height="4" rx="0.800" fill="none" stroke="#b4b4b4" stroke-width="1.400"/><rect x="0.800" y="7.200" width="10.400" height="4" rx="0.800" fill="none" stroke="#b4b4b4" stroke-width="1.400"/><path d="M11.400 2.200h3.600v7.800h-3.600" fill="none" stroke="#b4b4b4" stroke-width="1.500"/></svg>
<svg style="left:796px;top:768.5px;" width="18" height="12" viewBox="0 0 18 12"><path d="M0.500 6C3 2.200 6 1 8.700 1s5.700 1.200 8.200 5C14.400 9.800 11.400 11 8.700 11S3 9.800 0.500 6z" fill="#b4b4b4"/><circle cx="8.700" cy="6" r="3" fill="#262626"/><circle cx="9.600" cy="5.100" r="0.900" fill="#b4b4b4"/></svg>
<svg style="left:695.3px;top:808.8px;" width="12" height="15" viewBox="0 0 12 15"><path d="M2.600 7V4.300a3.200 3.200 0 0 1 5.800-1.800" stroke="#b4b4b4" stroke-width="1.700" fill="none"/><rect x="0.800" y="6.500" width="10.400" height="8" rx="1" fill="#b4b4b4"/><path d="M6 9v3" stroke="#262626" stroke-width="1.800"/></svg>
<span class="t " style="left:724.5px;top:814.09px;font-size:12.3px;line-height:12.3px;color:#b9d4ea;transform:scaleX(0.9305);">V1</span>
<svg style="left:763px;top:798.5px;" width="17" height="13" viewBox="0 0 17 13"><rect x="0.800" y="0.800" width="10.400" height="4" rx="0.800" fill="none" stroke="#b4b4b4" stroke-width="1.400"/><rect x="0.800" y="7.200" width="10.400" height="4" rx="0.800" fill="none" stroke="#b4b4b4" stroke-width="1.400"/><path d="M11.400 2.200h3.600v7.800h-3.600" fill="none" stroke="#b4b4b4" stroke-width="1.500"/></svg>
<svg style="left:796px;top:799.5px;" width="18" height="12" viewBox="0 0 18 12"><path d="M0.500 6C3 2.200 6 1 8.700 1s5.700 1.200 8.200 5C14.400 9.800 11.400 11 8.700 11S3 9.800 0.500 6z" fill="#b4b4b4"/><circle cx="8.700" cy="6" r="3" fill="#262626"/><circle cx="9.600" cy="5.100" r="0.900" fill="#b4b4b4"/></svg>
<svg style="left:695.3px;top:855.8px;" width="12" height="15" viewBox="0 0 12 15"><path d="M2.600 7V4.300a3.200 3.200 0 0 1 5.800-1.800" stroke="#b4b4b4" stroke-width="1.700" fill="none"/><rect x="0.800" y="6.500" width="10.400" height="8" rx="1" fill="#b4b4b4"/><path d="M6 9v3" stroke="#262626" stroke-width="1.800"/></svg>
<span class="t " style="left:724.5px;top:861.39px;font-size:12.3px;line-height:12.3px;color:#b9d4ea;transform:scaleX(0.9305);">A3</span>
<svg style="left:763px;top:859.0px;" width="17" height="13" viewBox="0 0 17 13"><rect x="0.800" y="0.800" width="10.400" height="4" rx="0.800" fill="none" stroke="#b4b4b4" stroke-width="1.400"/><rect x="0.800" y="7.200" width="10.400" height="4" rx="0.800" fill="none" stroke="#b4b4b4" stroke-width="1.400"/><path d="M11.400 2.200h3.600v7.800h-3.600" fill="none" stroke="#b4b4b4" stroke-width="1.500"/></svg>
<span class="t " style="left:799px;top:859.57px;font-size:13.5px;line-height:13.5px;color:#b4b4b4;transform:scaleX(0.9781);">M</span>
<span class="t " style="left:833px;top:859.57px;font-size:13.5px;line-height:13.5px;color:#b4b4b4;">S</span>
<svg style="left:865px;top:855.5px;" width="14" height="20" viewBox="0 0 14 20"><rect x="3.600" y="0.800" width="6.800" height="11" rx="3.400" fill="#b4b4b4"/><path d="M1.500 7.500v1.500a5.500 5.500 0 0 0 11 0V7.500M7 14.500v3M3.500 17.700h7" stroke="#b4b4b4" stroke-width="1.300" fill="none"/></svg>
<svg style="left:695.3px;top:916.8px;" width="12" height="15" viewBox="0 0 12 15"><path d="M2.600 7V4.300a3.200 3.200 0 0 1 5.800-1.800" stroke="#b4b4b4" stroke-width="1.700" fill="none"/><rect x="0.800" y="6.500" width="10.400" height="8" rx="1" fill="#b4b4b4"/><path d="M6 9v3" stroke="#262626" stroke-width="1.800"/></svg>
<span class="t " style="left:724.5px;top:922.39px;font-size:12.3px;line-height:12.3px;color:#b9d4ea;transform:scaleX(0.9305);">A4</span>
<svg style="left:763px;top:888.5px;" width="17" height="13" viewBox="0 0 17 13"><rect x="0.800" y="0.800" width="10.400" height="4" rx="0.800" fill="none" stroke="#b4b4b4" stroke-width="1.400"/><rect x="0.800" y="7.200" width="10.400" height="4" rx="0.800" fill="none" stroke="#b4b4b4" stroke-width="1.400"/><path d="M11.400 2.200h3.600v7.800h-3.600" fill="none" stroke="#b4b4b4" stroke-width="1.500"/></svg>
<span class="t " style="left:799px;top:889.07px;font-size:13.5px;line-height:13.5px;color:#b4b4b4;transform:scaleX(0.9781);">M</span>
<span class="t " style="left:833px;top:889.07px;font-size:13.5px;line-height:13.5px;color:#b4b4b4;">S</span>
<svg style="left:865px;top:885px;" width="14" height="20" viewBox="0 0 14 20"><rect x="3.600" y="0.800" width="6.800" height="11" rx="3.400" fill="#b4b4b4"/><path d="M1.500 7.500v1.500a5.500 5.500 0 0 0 11 0V7.500M7 14.500v3M3.500 17.700h7" stroke="#b4b4b4" stroke-width="1.300" fill="none"/></svg>
<span class="t " style="left:756px;top:918.88px;font-size:15.5px;line-height:15.5px;color:#8e8e8e;transform:scaleX(0.9130);">Audio 4</span>
<div style="left:928px;top:790px;width:506px;height:55px;background:#ade6ff;"></div>
<div style="left:972.2px;top:790px;width:10.0px;height:55px;background:#7dfe7f;"></div>
<div style="left:983.2px;top:790px;width:13.099999999999909px;height:55px;background:#7dfe7f;"></div>
<div style="left:997px;top:790px;width:11.299999999999955px;height:55px;background:#7dfe7f;"></div>
<div style="left:1010px;top:790px;width:13px;height:55px;background:#7dfe7f;"></div>
<div style="left:1110px;top:790px;width:7px;height:55px;background:#7dfe7f;"></div>
<div style="left:1158px;top:790px;width:12px;height:55px;background:#7dfe7f;"></div>
<div style="left:1434px;top:790px;width:51px;height:55px;background:#ade6ff;"></div>
<div style="left:1486px;top:790px;width:5.2px;height:55px;background:#ade6ff;"></div>
<div style="left:1485px;top:790px;width:1px;height:55px;background:#2b2b2b;"></div>
<svg style="left:1434px;top:790px" width="51" height="55" viewBox="0 0 51 55"><defs><filter id="b1" x="-10%" y="-10%" width="120%" height="120%"><feGaussianBlur stdDeviation="1.100"/></filter><clipPath id="c1"><path d="M0 20H32V0H51V55H0z"/></clipPath></defs><g clip-path="url(#c1)"><g filter="url(#b1)"><rect x="-3" y="-3" width="57" height="61" fill="#2a3040"/><path d="M30 -3H54V26H30z" fill="#a8968c"/><path d="M30 -3H39V9L35 21H30z" fill="#bfb0a8"/><path d="M41 0L52 -1V11L45 8z" fill="#9a8a86"/><path d="M38.500 10l8 0.500l-0.500 4l-6 1z" fill="#3e3038"/><path d="M44 4h6v2.200h-6z" fill="#5c5a68"/><path d="M44 17L54 10V58H46z" fill="#4e6a2c"/><path d="M47.500 20L54 15V33L50 37z" fill="#869c4a"/><path d="M48 22l3-2 1 5-3 2zM47 30l3-1 2 4-3 1z" fill="#c4d080"/><path d="M46 40L54 35V58H45z" fill="#34481f"/><path d="M17 19H38V26.500L29.600 37L24.600 30z" fill="#75665a"/><path d="M-3 19H17L25 34V58H-3z" fill="#333e4a"/><path d="M0 19H8L13 58H0z" fill="#3e4a56"/><path d="M17 22L29.600 37L37 27L41 30V58H17z" fill="#22273a"/><path d="M18 37H40M18 41.500H40M18 46H40" stroke="#343a50" stroke-width="1.300"/><path d="M37 27L45 33L47.500 58H38.500z" fill="#36424e"/><path d="M3 49L30 46.500L42 52V58H3z" fill="#242a3a"/><path d="M45 48H54V58H43z" fill="#1c222c"/></g></g><rect x="0" y="0" width="1.300" height="55" fill="#8c949c"/></svg>
<div style="left:1446px;top:795px;width:16px;height:13.5px;background:#f6c410;border:1px solid #c8b880;"></div>
<span class="t " style="left:1449.5px;top:794.50px;font-size:13px;line-height:13px;color:#000;font-style:italic;transform:scaleX(0.9395);">fx</span>
<div style="left:1531px;top:790px;width:235px;height:55px;background:#729dd3;"></div>
<div style="left:1772px;top:790px;width:9px;height:55px;background:#729dd3;"></div>
<div style="left:1736.3px;top:790px;width:1.2px;height:55px;background:#d8d8d8;"></div>
<svg style="left:1531px;top:810px" width="98" height="35" viewBox="0 0 98 35"><defs><filter id="rk" x="0" y="0" width="100%" height="100%" color-interpolation-filters="sRGB"><feTurbulence type="fractalNoise" baseFrequency="0.240 0.340" numOctaves="2" seed="7"/><feColorMatrix type="matrix" values="1.900 0 0 0 -0.520  1.850 0 0 0 -0.520  1.800 0 0 0 -0.520  0 0 0 0 1"/><feGaussianBlur stdDeviation="0.450"/></filter><linearGradient id="rg" x1="0" y1="0" x2="1" y2="1"><stop offset="0" stop-color="#14161c" stop-opacity="0.700"/><stop offset="0.400" stop-color="#20232a" stop-opacity="0.400"/><stop offset="0.750" stop-color="#d8d4cc" stop-opacity="0.180"/><stop offset="1" stop-color="#e8e4dc" stop-opacity="0.380"/></linearGradient></defs><rect width="98" height="35" fill="#8a8784"/><rect width="98" height="35" filter="url(#rk)"/><rect width="98" height="35" fill="url(#rg)"/><path d="M8 35l4-5 8 1 3 4z" fill="#a58668" opacity="0.550"/></svg>
<div style="left:1772px;top:810px;width:9px;height:35px;background:linear-gradient(180deg,#3f6a3e,#2c4a34 50%,#35553a);"></div>
<div style="left:1543px;top:795px;width:16px;height:13.5px;background:#8b8b8b;border:1px solid #6f7f93;"></div>
<span class="t " style="left:1546.5px;top:794.50px;font-size:13px;line-height:13px;color:#1a1a1a;font-style:italic;transform:scaleX(0.9395);">fx</span>
<span class="t " style="left:1567.5px;top:795.16px;font-size:12.8px;line-height:12.8px;color:#081226;transform:scaleX(0.8495);text-shadow:0.300px 0 0 #081226;">MOV_0279.mp4 [V]</span>
<svg style="left:928px;top:790px;" width="853" height="55" viewBox="0 0 853 55"><rect x="24.2" y="0" width="1.1" height="55" fill="#2b2b2b"/><rect x="25.3" y="0" width="1" height="55" fill="#fff" fill-opacity="0.300"/><rect x="33.0" y="0" width="1.2" height="55" fill="#2b2b2b"/><rect x="34.2" y="0" width="1" height="55" fill="#fff" fill-opacity="0.300"/><rect x="43.2" y="0" width="1.0" height="55" fill="#2b2b2b"/><rect x="44.2" y="0" width="1" height="55" fill="#fff" fill-opacity="0.300"/><rect x="54.2" y="0" width="1.0" height="55" fill="#2b2b2b"/><rect x="55.2" y="0" width="1" height="55" fill="#fff" fill-opacity="0.300"/><rect x="68.2" y="0" width="0.8" height="55" fill="#2b2b2b"/><rect x="69.0" y="0" width="1" height="55" fill="#fff" fill-opacity="0.300"/><rect x="80.3" y="0" width="1.7" height="55" fill="#2b2b2b"/><rect x="82.0" y="0" width="1" height="55" fill="#fff" fill-opacity="0.300"/><rect x="95.0" y="0" width="2.0" height="55" fill="#2b2b2b"/><rect x="97.0" y="0" width="1" height="55" fill="#fff" fill-opacity="0.300"/><rect x="107.0" y="0" width="1.2" height="55" fill="#2b2b2b"/><rect x="108.2" y="0" width="1" height="55" fill="#fff" fill-opacity="0.300"/><rect x="115.0" y="0" width="2.0" height="55" fill="#2b2b2b"/><rect x="117.0" y="0" width="1" height="55" fill="#fff" fill-opacity="0.300"/><rect x="130.0" y="0" width="2.0" height="55" fill="#2b2b2b"/><rect x="132.0" y="0" width="1" height="55" fill="#fff" fill-opacity="0.300"/><rect x="147.0" y="0" width="1.2" height="55" fill="#2b2b2b"/><rect x="148.2" y="0" width="1" height="55" fill="#fff" fill-opacity="0.300"/><rect x="175.3" y="0" width="1.7" height="55" fill="#2b2b2b"/><rect x="177.0" y="0" width="1" height="55" fill="#fff" fill-opacity="0.300"/><rect x="180.0" y="0" width="2.0" height="55" fill="#2b2b2b"/><rect x="182.0" y="0" width="1" height="55" fill="#fff" fill-opacity="0.300"/><rect x="189.0" y="0" width="1.0" height="55" fill="#2b2b2b"/><rect x="190.0" y="0" width="1" height="55" fill="#fff" fill-opacity="0.300"/><rect x="199.2" y="0" width="1.1" height="55" fill="#2b2b2b"/><rect x="200.3" y="0" width="1" height="55" fill="#fff" fill-opacity="0.300"/><rect x="210.0" y="0" width="2.0" height="55" fill="#2b2b2b"/><rect x="212.0" y="0" width="1" height="55" fill="#fff" fill-opacity="0.300"/><rect x="218.2" y="0" width="0.8" height="55" fill="#2b2b2b"/><rect x="219.0" y="0" width="1" height="55" fill="#fff" fill-opacity="0.300"/><rect x="228.7" y="0" width="1.3" height="55" fill="#2b2b2b"/><rect x="230.0" y="0" width="1" height="55" fill="#fff" fill-opacity="0.300"/><rect x="242.0" y="0" width="1.0" height="55" fill="#2b2b2b"/><rect x="243.0" y="0" width="1" height="55" fill="#fff" fill-opacity="0.300"/><rect x="260.0" y="0" width="2.0" height="55" fill="#2b2b2b"/><rect x="262.0" y="0" width="1" height="55" fill="#fff" fill-opacity="0.300"/><rect x="267.8" y="0" width="1.2" height="55" fill="#2b2b2b"/><rect x="269.0" y="0" width="1" height="55" fill="#fff" fill-opacity="0.300"/><rect x="289.5" y="0" width="0.8" height="55" fill="#2b2b2b"/><rect x="290.3" y="0" width="1" height="55" fill="#fff" fill-opacity="0.300"/><rect x="312.0" y="0" width="1.0" height="55" fill="#2b2b2b"/><rect x="313.0" y="0" width="1" height="55" fill="#fff" fill-opacity="0.300"/><rect x="327.0" y="0" width="1.0" height="55" fill="#2b2b2b"/><rect x="328.0" y="0" width="1" height="55" fill="#fff" fill-opacity="0.300"/><rect x="339.0" y="0" width="1.0" height="55" fill="#2b2b2b"/><rect x="340.0" y="0" width="1" height="55" fill="#fff" fill-opacity="0.300"/><rect x="347.0" y="0" width="1.0" height="55" fill="#2b2b2b"/><rect x="348.0" y="0" width="1" height="55" fill="#fff" fill-opacity="0.300"/><rect x="374.0" y="0" width="1.0" height="55" fill="#2b2b2b"/><rect x="375.0" y="0" width="1" height="55" fill="#fff" fill-opacity="0.300"/><rect x="389.0" y="0" width="1.0" height="55" fill="#2b2b2b"/><rect x="390.0" y="0" width="1" height="55" fill="#fff" fill-opacity="0.300"/><rect x="400.5" y="0" width="1.2" height="55" fill="#2b2b2b"/><rect x="401.7" y="0" width="1" height="55" fill="#fff" fill-opacity="0.300"/><rect x="424.5" y="0" width="1.0" height="55" fill="#2b2b2b"/><rect x="425.5" y="0" width="1" height="55" fill="#fff" fill-opacity="0.300"/><rect x="440.3" y="0" width="1.4" height="55" fill="#2b2b2b"/><rect x="441.7" y="0" width="1" height="55" fill="#fff" fill-opacity="0.300"/><rect x="445.5" y="0" width="1.2" height="55" fill="#2b2b2b"/><rect x="446.7" y="0" width="1" height="55" fill="#fff" fill-opacity="0.300"/><rect x="457.0" y="0" width="1.0" height="55" fill="#2b2b2b"/><rect x="458.0" y="0" width="1" height="55" fill="#fff" fill-opacity="0.300"/><rect x="478.2" y="0" width="1.0" height="55" fill="#2b2b2b"/><rect x="479.2" y="0" width="1" height="55" fill="#fff" fill-opacity="0.300"/><rect x="490.3" y="0" width="1.4" height="55" fill="#2b2b2b"/><rect x="491.7" y="0" width="1" height="55" fill="#fff" fill-opacity="0.300"/><rect x="504.8" y="0" width="1.2" height="55" fill="#2b2b2b"/><rect x="506.0" y="0" width="1" height="55" fill="#fff" fill-opacity="0.300"/><path d="M0.0 0h6.500l-6.500 6.500z" fill="#d0d0d0" stroke="#2b2b2b" stroke-width="0.600"/><path d="M44.2 0h6.500l-6.500 6.500z" fill="#d0d0d0" stroke="#2b2b2b" stroke-width="0.600"/><path d="M55.2 0h6.500l-6.500 6.500z" fill="#d0d0d0" stroke="#2b2b2b" stroke-width="0.600"/><path d="M69.0 0h6.500l-6.500 6.500z" fill="#d0d0d0" stroke="#2b2b2b" stroke-width="0.600"/><path d="M82.0 0h6.500l-6.500 6.500z" fill="#d0d0d0" stroke="#2b2b2b" stroke-width="0.600"/><path d="M97.0 0h6.500l-6.500 6.500z" fill="#d0d0d0" stroke="#2b2b2b" stroke-width="0.600"/><path d="M132.0 0h6.500l-6.500 6.500z" fill="#d0d0d0" stroke="#2b2b2b" stroke-width="0.600"/><path d="M182.0 0h6.500l-6.500 6.500z" fill="#d0d0d0" stroke="#2b2b2b" stroke-width="0.600"/><path d="M200.3 0h6.500l-6.500 6.500z" fill="#d0d0d0" stroke="#2b2b2b" stroke-width="0.600"/><path d="M219.0 0h6.500l-6.500 6.500z" fill="#d0d0d0" stroke="#2b2b2b" stroke-width="0.600"/><path d="M230.0 0h6.500l-6.500 6.500z" fill="#d0d0d0" stroke="#2b2b2b" stroke-width="0.600"/><path d="M243.0 0h6.500l-6.500 6.500z" fill="#d0d0d0" stroke="#2b2b2b" stroke-width="0.600"/><path d="M347.7 0h6.500l-6.500 6.500z" fill="#d0d0d0" stroke="#2b2b2b" stroke-width="0.600"/><path d="M425.3 0h6.500l-6.500 6.500z" fill="#d0d0d0" stroke="#2b2b2b" stroke-width="0.600"/><path d="M457.8 0h6.500l-6.500 6.500z" fill="#d0d0d0" stroke="#2b2b2b" stroke-width="0.600"/><path d="M603.0 0h6.500l-6.500 6.500z" fill="#d0d0d0" stroke="#2b2b2b" stroke-width="0.600"/><path d="M809.0 0h6.500l-6.500 6.500z" fill="#d0d0d0" stroke="#2b2b2b" stroke-width="0.600"/><path d="M844.0 0h6.500l-6.500 6.500z" fill="#d0d0d0" stroke="#2b2b2b" stroke-width="0.600"/><path d="M68.3 0h-6.500l6.500 6.500z" fill="#d0d0d0" stroke="#2b2b2b" stroke-width="0.600"/><path d="M80.3 0h-6.500l6.500 6.500z" fill="#d0d0d0" stroke="#2b2b2b" stroke-width="0.600"/><path d="M218.2 0h-6.500l6.500 6.500z" fill="#d0d0d0" stroke="#2b2b2b" stroke-width="0.600"/><path d="M242.0 0h-6.500l6.500 6.500z" fill="#d0d0d0" stroke="#2b2b2b" stroke-width="0.600"/><path d="M289.5 0h-6.500l6.500 6.500z" fill="#d0d0d0" stroke="#2b2b2b" stroke-width="0.600"/><path d="M505.0 0h-6.500l6.500 6.500z" fill="#d0d0d0" stroke="#2b2b2b" stroke-width="0.600"/><path d="M808.5 0h-6.500l6.500 6.500z" fill="#d0d0d0" stroke="#2b2b2b" stroke-width="0.600"/></svg>
<div style="left:1036px;top:852px;width:22px;height:27px;background:#1fa072;"></div>
<div style="left:1036px;top:859.5px;width:22px;height:4px;background:#3cf7dc;"></div>
<div style="left:1036px;top:875px;width:22px;height:4px;background:#3cf7dc;"></div>
<div style="left:1120px;top:852px;width:18px;height:27px;background:linear-gradient(180deg,#5c7bab 0 5px,#ade6ff 5px 12px,#5c7bab 12px 19.500px,#ade6ff 19.500px 27px);"></div>
<div style="left:1238px;top:852px;width:3px;height:27px;background:linear-gradient(180deg,#8fb0dc 0 5px,#5a5f8c 5px 22px,#ade6ff 22px 27px);"></div>
<div style="left:928px;top:880px;width:134px;height:91px;background:#1fa072;"></div>
<div style="left:928px;top:880px;width:1px;height:91px;background:#5fc4a0;"></div>
<div style="left:928px;top:969.5px;width:134px;height:1.5px;background:#3cf7dc;"></div>
<div style="left:931px;top:904px;width:15px;height:17.5px;background:#0f5a40;"></div>
<span class="t " style="left:933.7px;top:908.08px;font-size:11.6px;line-height:11.6px;color:#cfcfb2;transform:scaleX(0.8867);">G</span>
<div style="left:931px;top:950px;width:16px;height:18px;background:#0f5a40;"></div>
<span class="t " style="left:933.7px;top:954.58px;font-size:11.6px;line-height:11.6px;color:#cfcfb2;transform:scaleX(0.8953);">D</span>
<div style="left:941.5px;top:885px;width:16px;height:13.5px;background:#b48ee2;border:1px solid #9a86b8;"></div>
<span class="t " style="left:945px;top:884.50px;font-size:13px;line-height:13px;color:#000;font-style:italic;transform:scaleX(0.9395);">fx</span>
<div style="left:930px;top:925.3px;width:128px;height:1.2px;background:#ffffff;"></div>
<div style="left:930px;top:926.5px;width:128px;height:1.2px;background:#101010;"></div>
<div style="left:1058px;top:903px;width:4px;height:22.5px;background:#c8a25e;border:1px solid #6a5c84;border-right:none;"></div>
<div style="left:1058px;top:927.7px;width:4px;height:22.5px;background:#c8a25e;border:1px solid #6a5c84;border-right:none;"></div>
<div style="left:1207px;top:880px;width:31px;height:91px;background:#1fa072;"></div>
<div style="left:1207px;top:880px;width:1px;height:91px;background:#5fc4a0;"></div>
<div style="left:1207px;top:969.5px;width:31px;height:1.5px;background:#3cf7dc;"></div>
<div style="left:1207px;top:925.3px;width:31px;height:2.2px;background:#3cf7dc;"></div>
<div style="left:1210px;top:904px;width:15px;height:17.5px;background:#0f5a40;"></div>
<span class="t " style="left:1212.7px;top:908.08px;font-size:11.6px;line-height:11.6px;color:#cfcfb2;transform:scaleX(0.8867);">G</span>
<div style="left:1210px;top:950px;width:16px;height:18px;background:#0f5a40;"></div>
<span class="t " style="left:1212.7px;top:954.58px;font-size:11.6px;line-height:11.6px;color:#cfcfb2;transform:scaleX(0.8953);">D</span>
<div style="left:1239.8px;top:880px;width:30.200000000000045px;height:91px;background:#1fa072;"></div>
<div style="left:1239.8px;top:880px;width:1px;height:91px;background:#5fc4a0;"></div>
<div style="left:1239.8px;top:969.5px;width:30.200000000000045px;height:1.5px;background:#3cf7dc;"></div>
<div style="left:1239.8px;top:925.3px;width:30.200000000000045px;height:2.2px;background:#3cf7dc;"></div>
<div style="left:1242.2px;top:904px;width:15px;height:17.5px;background:#0f5a40;"></div>
<span class="t " style="left:1244.9px;top:908.08px;font-size:11.6px;line-height:11.6px;color:#cfcfb2;transform:scaleX(0.8867);">G</span>
<div style="left:1242.2px;top:950px;width:16px;height:18px;background:#0f5a40;"></div>
<span class="t " style="left:1244.9px;top:954.58px;font-size:11.6px;line-height:11.6px;color:#cfcfb2;transform:scaleX(0.8953);">D</span>
<div style="left:1271px;top:880px;width:40px;height:91px;background:#1fa072;"></div>
<div style="left:1271px;top:880px;width:1px;height:91px;background:#5fc4a0;"></div>
<div style="left:1271px;top:969.5px;width:40px;height:1.5px;background:#3cf7dc;"></div>
<div style="left:1271px;top:925.3px;width:40px;height:2.2px;background:#3cf7dc;"></div>
<div style="left:1273.2px;top:904px;width:15px;height:17.5px;background:#0f5a40;"></div>
<span class="t " style="left:1275.9px;top:908.08px;font-size:11.6px;line-height:11.6px;color:#cfcfb2;transform:scaleX(0.8867);">G</span>
<div style="left:1273.2px;top:950px;width:16px;height:18px;background:#0f5a40;"></div>
<span class="t " style="left:1275.9px;top:954.58px;font-size:11.6px;line-height:11.6px;color:#cfcfb2;transform:scaleX(0.8953);">D</span>
<div style="left:1283px;top:885px;width:16px;height:13.5px;background:#f5c400;border:1px solid #a8a088;"></div>
<span class="t " style="left:1286.5px;top:884.50px;font-size:13px;line-height:13px;color:#000;font-style:italic;transform:scaleX(0.9395);">fx</span>
<div style="left:1312.3px;top:880px;width:33.700000000000045px;height:91px;background:#1fa072;"></div>
<div style="left:1312.3px;top:880px;width:1px;height:91px;background:#5fc4a0;"></div>
<div style="left:1312.3px;top:969.5px;width:33.700000000000045px;height:1.5px;background:#3cf7dc;"></div>
<div style="left:1312.3px;top:925.3px;width:33.700000000000045px;height:2.2px;background:#3cf7dc;"></div>
<div style="left:1315.0px;top:904px;width:15px;height:17.5px;background:#0f5a40;"></div>
<span class="t " style="left:1317.7px;top:908.08px;font-size:11.6px;line-height:11.6px;color:#cfcfb2;transform:scaleX(0.8867);">G</span>
<div style="left:1315.0px;top:950px;width:16px;height:18px;background:#0f5a40;"></div>
<span class="t " style="left:1317.7px;top:954.58px;font-size:11.6px;line-height:11.6px;color:#cfcfb2;transform:scaleX(0.8953);">D</span>
<div style="left:1347px;top:880px;width:145px;height:91px;background:#1fa072;"></div>
<div style="left:1347px;top:880px;width:1px;height:91px;background:#5fc4a0;"></div>
<div style="left:1347px;top:969.5px;width:145px;height:1.5px;background:#3cf7dc;"></div>
<div style="left:1347px;top:925.3px;width:145px;height:2.2px;background:#3cf7dc;"></div>
<div style="left:1350px;top:904px;width:15px;height:17.5px;background:#0f5a40;"></div>
<span class="t " style="left:1352.7px;top:908.08px;font-size:11.6px;line-height:11.6px;color:#cfcfb2;transform:scaleX(0.8867);">G</span>
<div style="left:1350px;top:950px;width:16px;height:18px;background:#0f5a40;"></div>
<span class="t " style="left:1352.7px;top:954.58px;font-size:11.6px;line-height:11.6px;color:#cfcfb2;transform:scaleX(0.8953);">D</span>
<div style="left:1360px;top:885px;width:16px;height:13.5px;background:#f5c400;border:1px solid #a8a088;"></div>
<span class="t " style="left:1363.5px;top:884.50px;font-size:13px;line-height:13px;color:#000;font-style:italic;transform:scaleX(0.9395);">fx</span>
<div style="left:1238.2px;top:880px;width:1.6px;height:91px;background:#2b2b2b;"></div>
<div style="left:1270px;top:880px;width:1px;height:91px;background:#2b3a34;"></div>
<div style="left:1311px;top:880px;width:1px;height:91px;background:#2b3a34;"></div>
<div style="left:1346px;top:880px;width:1px;height:91px;background:#2b3a34;"></div>
<div style="left:1492px;top:880px;width:76px;height:91px;background:#176c4b;"></div>
<div style="left:1492px;top:925.3px;width:76px;height:2.2px;background:#2edc9e;"></div>
<div style="left:1492px;top:969.5px;width:76px;height:1.5px;background:#2edc9e;"></div>
<div style="left:1570.5px;top:880px;width:34.0px;height:91px;background:#176c4b;"></div>
<div style="left:1570.5px;top:880px;width:1px;height:91px;background:#4a9a7c;"></div>
<div style="left:1570.5px;top:969.5px;width:34.0px;height:1.5px;background:#2edc9e;"></div>
<div style="left:1570.5px;top:925.3px;width:34.0px;height:2.2px;background:#2edc9e;"></div>
<div style="left:1572.2px;top:904px;width:15px;height:17.5px;background:#0b3f2c;"></div>
<span class="t " style="left:1574.9px;top:908.08px;font-size:11.6px;line-height:11.6px;color:#b9c4b0;transform:scaleX(0.8867);">G</span>
<div style="left:1572.2px;top:950px;width:16px;height:18px;background:#0b3f2c;"></div>
<span class="t " style="left:1574.9px;top:954.58px;font-size:11.6px;line-height:11.6px;color:#b9c4b0;transform:scaleX(0.8953);">D</span>
<div style="left:1582.0px;top:885px;width:16px;height:13.5px;background:#f5c400;border:1px solid #a8a088;"></div>
<span class="t " style="left:1585.5px;top:884.50px;font-size:13px;line-height:13px;color:#000;font-style:italic;transform:scaleX(0.9395);">fx</span>
<div style="left:1606.5px;top:880px;width:35.5px;height:91px;background:#176c4b;"></div>
<div style="left:1606.5px;top:880px;width:1px;height:91px;background:#4a9a7c;"></div>
<div style="left:1606.5px;top:969.5px;width:35.5px;height:1.5px;background:#2edc9e;"></div>
<div style="left:1606.5px;top:925.3px;width:35.5px;height:2.2px;background:#2edc9e;"></div>
<div style="left:1608.2px;top:904px;width:15px;height:17.5px;background:#0b3f2c;"></div>
<span class="t " style="left:1610.9px;top:908.08px;font-size:11.6px;line-height:11.6px;color:#b9c4b0;transform:scaleX(0.8867);">G</span>
<div style="left:1608.2px;top:950px;width:16px;height:18px;background:#0b3f2c;"></div>
<span class="t " style="left:1610.9px;top:954.58px;font-size:11.6px;line-height:11.6px;color:#b9c4b0;transform:scaleX(0.8953);">D</span>
<div style="left:1618.0px;top:885px;width:16px;height:13.5px;background:#f5c400;border:1px solid #a8a088;"></div>
<span class="t " style="left:1621.5px;top:884.50px;font-size:13px;line-height:13px;color:#000;font-style:italic;transform:scaleX(0.9395);">fx</span>
<div style="left:1643.5px;top:880px;width:32.5px;height:91px;background:#176c4b;"></div>
<div style="left:1643.5px;top:880px;width:1px;height:91px;background:#4a9a7c;"></div>
<div style="left:1643.5px;top:969.5px;width:32.5px;height:1.5px;background:#2edc9e;"></div>
<div style="left:1643.5px;top:925.3px;width:32.5px;height:2.2px;background:#2edc9e;"></div>
<div style="left:1646.0px;top:904px;width:15px;height:17.5px;background:#0b3f2c;"></div>
<span class="t " style="left:1648.7px;top:908.08px;font-size:11.6px;line-height:11.6px;color:#b9c4b0;transform:scaleX(0.8867);">G</span>
<div style="left:1646.0px;top:950px;width:16px;height:18px;background:#0b3f2c;"></div>
<span class="t " style="left:1648.7px;top:954.58px;font-size:11.6px;line-height:11.6px;color:#b9c4b0;transform:scaleX(0.8953);">D</span>
<div style="left:1568px;top:880px;width:2px;height:91px;background:#2a3a34;"></div>
<div style="left:1604.5px;top:880px;width:2px;height:91px;background:#2a3a34;"></div>
<div style="left:1642px;top:880px;width:2px;height:91px;background:#2a3a34;"></div>
<svg style="left:1200px;top:880px;overflow:hidden" width="477" height="91" viewBox="0 0 477 91"><path d="M1207 958L1221 945L1230.500 950L1237.500 956L1244.700 956L1250 952.600H1676" fill="none" stroke="#101010" stroke-width="2.600" transform="translate(-1200,-880)"/><path d="M1207 958L1221 945L1230.500 950L1237.500 956L1244.700 956L1250 952.600H1676" fill="none" stroke="#ffffff" stroke-width="1.300" transform="translate(-1200,-880)"/><path d="M4.8 75.5l4.700-5.200 4.700 5.200-4.700 5.200z" fill="#c6c6c6" stroke="#1a1a1a" stroke-width="0.800"/><path d="M16.3 65.0l4.700-5.200 4.700 5.200-4.700 5.200z" fill="#c6c6c6" stroke="#1a1a1a" stroke-width="0.800"/><path d="M25.8 70.0l4.700-5.200 4.700 5.200-4.700 5.200z" fill="#c6c6c6" stroke="#1a1a1a" stroke-width="0.800"/><path d="M32.8 75.5l4.700-5.200 4.700 5.200-4.700 5.200z" fill="#c6c6c6" stroke="#1a1a1a" stroke-width="0.800"/><path d="M40.0 75.5l4.700-5.200 4.700 5.200-4.700 5.200z" fill="#c6c6c6" stroke="#1a1a1a" stroke-width="0.800"/><path d="M471.3 75.5l4.700-5.200 4.700 5.200-4.700 5.200z" fill="#c6c6c6" stroke="#1a1a1a" stroke-width="0.800"/></svg>
<svg style="left:1492px;top:707px;" width="16" height="16" viewBox="0 0 16 16"><path d="M0 0h15v8.500l-6 6.500h-3l-6-6.500z" fill="#2d8ceb"/></svg>
<div style="left:1500px;top:715px;width:1.3px;height:257px;background:#2d8ceb;"></div>
<div style="left:1782px;top:737px;width:12px;height:101px;background:#343434;"></div>
<div style="left:1782px;top:861px;width:12px;height:102px;background:#343434;"></div>
<svg style="left:1781px;top:730.3px;" width="14" height="14" viewBox="0 0 14 14"><circle cx="7" cy="7" r="4.800" fill="#232323" stroke="#a9a9a9" stroke-width="2.200"/></svg>
<svg style="left:1781px;top:831px;" width="14" height="14" viewBox="0 0 14 14"><circle cx="7" cy="7" r="4.800" fill="#232323" stroke="#a9a9a9" stroke-width="2.200"/></svg>
<svg style="left:1781px;top:854px;" width="14" height="14" viewBox="0 0 14 14"><circle cx="7" cy="7" r="4.800" fill="#232323" stroke="#a9a9a9" stroke-width="2.200"/></svg>
<svg style="left:1781px;top:956px;" width="14" height="14" viewBox="0 0 14 14"><circle cx="7" cy="7" r="4.800" fill="#232323" stroke="#a9a9a9" stroke-width="2.200"/></svg>
<div style="left:650px;top:972.5px;width:1129px;height:12.5px;background:#1b1b1b;border-radius:6.500px;"></div>
<div style="left:655px;top:972.5px;width:476px;height:12.5px;background:#343434;"></div>
<svg style="left:648.5px;top:972px;" width="14" height="14" viewBox="0 0 14 14"><circle cx="7" cy="7" r="4.800" fill="#232323" stroke="#a9a9a9" stroke-width="2.200"/></svg>
<svg style="left:1123.5px;top:972px;" width="14" height="14" viewBox="0 0 14 14"><circle cx="7" cy="7" r="4.800" fill="#232323" stroke="#a9a9a9" stroke-width="2.200"/></svg>
<div style="left:1816px;top:633px;width:103px;height:369px;background:#232323;"></div>
<div style="left:1831px;top:666px;width:46px;height:294px;background:#1b1b1b;border:1px solid #0a0a0a;"></div>
<div style="left:1832px;top:677px;width:44px;height:1px;background:#0a0a0a;"></div>
<div style="left:1853.5px;top:667px;width:1px;height:10px;background:#0a0a0a;"></div>
<div style="left:1854.5px;top:667px;width:21.5px;height:10.5px;background:#ee4545;"></div>
<div style="left:1832px;top:956.5px;width:21px;height:1.8px;background:#e6e000;"></div>
<div style="left:1855px;top:956.5px;width:21px;height:1.8px;background:#e6e000;"></div>
<svg style="left:1877px;top:666px;" width="8" height="294" viewBox="0 0 8 294"><path d="M0 14.5h5" stroke="#6a6a6a" stroke-width="1"/><path d="M0 19.1h3" stroke="#6a6a6a" stroke-width="1"/><path d="M0 23.7h3" stroke="#6a6a6a" stroke-width="1"/><path d="M0 28.3h3" stroke="#6a6a6a" stroke-width="1"/><path d="M0 32.9h3" stroke="#6a6a6a" stroke-width="1"/><path d="M0 37.5h3" stroke="#6a6a6a" stroke-width="1"/><path d="M0 42.0h5" stroke="#6a6a6a" stroke-width="1"/><path d="M0 46.6h3" stroke="#6a6a6a" stroke-width="1"/><path d="M0 51.2h3" stroke="#6a6a6a" stroke-width="1"/><path d="M0 55.8h3" stroke="#6a6a6a" stroke-width="1"/><path d="M0 60.4h3" stroke="#6a6a6a" stroke-width="1"/><path d="M0 65.0h3" stroke="#6a6a6a" stroke-width="1"/><path d="M0 69.6h5" stroke="#6a6a6a" stroke-width="1"/><path d="M0 74.2h3" stroke="#6a6a6a" stroke-width="1"/><path d="M0 78.8h3" stroke="#6a6a6a" stroke-width="1"/><path d="M0 83.4h3" stroke="#6a6a6a" stroke-width="1"/><path d="M0 87.9h3" stroke="#6a6a6a" stroke-width="1"/><path d="M0 92.5h3" stroke="#6a6a6a" stroke-width="1"/><path d="M0 97.1h5" stroke="#6a6a6a" stroke-width="1"/><path d="M0 101.7h3" stroke="#6a6a6a" stroke-width="1"/><path d="M0 106.3h3" stroke="#6a6a6a" stroke-width="1"/><path d="M0 110.9h3" stroke="#6a6a6a" stroke-width="1"/><path d="M0 115.5h3" stroke="#6a6a6a" stroke-width="1"/><path d="M0 120.1h3" stroke="#6a6a6a" stroke-width="1"/><path d="M0 124.7h5" stroke="#6a6a6a" stroke-width="1"/><path d="M0 129.2h3" stroke="#6a6a6a" stroke-width="1"/><path d="M0 133.8h3" stroke="#6a6a6a" stroke-width="1"/><path d="M0 138.4h3" stroke="#6a6a6a" stroke-width="1"/><path d="M0 143.0h3" stroke="#6a6a6a" stroke-width="1"/><path d="M0 147.6h3" stroke="#6a6a6a" stroke-width="1"/><path d="M0 152.2h5" stroke="#6a6a6a" stroke-width="1"/><path d="M0 156.8h3" stroke="#6a6a6a" stroke-width="1"/><path d="M0 161.4h3" stroke="#6a6a6a" stroke-width="1"/><path d="M0 166.0h3" stroke="#6a6a6a" stroke-width="1"/><path d="M0 170.6h3" stroke="#6a6a6a" stroke-width="1"/><path d="M0 175.1h3" stroke="#6a6a6a" stroke-width="1"/><path d="M0 179.7h5" stroke="#6a6a6a" stroke-width="1"/><path d="M0 184.3h3" stroke="#6a6a6a" stroke-width="1"/><path d="M0 188.9h3" stroke="#6a6a6a" stroke-width="1"/><path d="M0 193.5h3" stroke="#6a6a6a" stroke-width="1"/><path d="M0 198.1h3" stroke="#6a6a6a" stroke-width="1"/><path d="M0 202.7h3" stroke="#6a6a6a" stroke-width="1"/><path d="M0 207.3h5" stroke="#6a6a6a" stroke-width="1"/><path d="M0 211.9h3" stroke="#6a6a6a" stroke-width="1"/><path d="M0 216.5h3" stroke="#6a6a6a" stroke-width="1"/><path d="M0 221.0h3" stroke="#6a6a6a" stroke-width="1"/><path d="M0 225.6h3" stroke="#6a6a6a" stroke-width="1"/><path d="M0 230.2h3" stroke="#6a6a6a" stroke-width="1"/><path d="M0 234.8h5" stroke="#6a6a6a" stroke-width="1"/><path d="M0 239.4h3" stroke="#6a6a6a" stroke-width="1"/><path d="M0 244.0h3" stroke="#6a6a6a" stroke-width="1"/><path d="M0 248.6h3" stroke="#6a6a6a" stroke-width="1"/><path d="M0 253.2h3" stroke="#6a6a6a" stroke-width="1"/><path d="M0 257.8h3" stroke="#6a6a6a" stroke-width="1"/><path d="M0 262.4h5" stroke="#6a6a6a" stroke-width="1"/><path d="M0 267.0h3" stroke="#6a6a6a" stroke-width="1"/><path d="M0 271.5h3" stroke="#6a6a6a" stroke-width="1"/><path d="M0 276.1h3" stroke="#6a6a6a" stroke-width="1"/><path d="M0 280.7h3" stroke="#6a6a6a" stroke-width="1"/><path d="M0 285.3h3" stroke="#6a6a6a" stroke-width="1"/><path d="M0 289.9h5" stroke="#6a6a6a" stroke-width="1"/></svg>
<span class="t " style="left:1888px;top:675.21px;font-size:11.8px;line-height:11.8px;color:#909090;transform:scaleX(0.9000);">0</span>
<span class="t " style="left:1887px;top:702.93px;font-size:11.8px;line-height:11.8px;color:#909090;transform:scaleX(0.9000);">-6</span>
<span class="t " style="left:1887px;top:730.65px;font-size:11.8px;line-height:11.8px;color:#909090;transform:scaleX(0.9000);">-12</span>
<span class="t " style="left:1887px;top:758.37px;font-size:11.8px;line-height:11.8px;color:#909090;transform:scaleX(0.9000);">-18</span>
<span class="t " style="left:1887px;top:786.09px;font-size:11.8px;line-height:11.8px;color:#909090;transform:scaleX(0.9000);">-24</span>
<span class="t " style="left:1887px;top:813.81px;font-size:11.8px;line-height:11.8px;color:#909090;transform:scaleX(0.9000);">-30</span>
<span class="t " style="left:1887px;top:841.53px;font-size:11.8px;line-height:11.8px;color:#909090;transform:scaleX(0.9000);">-36</span>
<span class="t " style="left:1887px;top:869.25px;font-size:11.8px;line-height:11.8px;color:#909090;transform:scaleX(0.9000);">-42</span>
<span class="t " style="left:1887px;top:896.97px;font-size:11.8px;line-height:11.8px;color:#909090;transform:scaleX(0.9000);">-48</span>
<span class="t " style="left:1887px;top:924.69px;font-size:11.8px;line-height:11.8px;color:#909090;transform:scaleX(0.9000);">-54</span>
<span class="t " style="left:1886.5px;top:949.51px;font-size:11.8px;line-height:11.8px;color:#909090;">dB</span>
<div style="left:1833px;top:966px;width:20.5px;height:20.5px;background:#212121;border:1px solid #343434;border-radius:2px;"></div>
<span class="t " style="left:1839.5px;top:970.42px;font-size:12.5px;line-height:12.5px;color:#b0b0b0;transform:scaleX(0.8995);">S</span>
<div style="left:1855px;top:966px;width:20.5px;height:20.5px;background:#212121;border:1px solid #343434;border-radius:2px;"></div>
<span class="t " style="left:1861.5px;top:970.42px;font-size:12.5px;line-height:12.5px;color:#b0b0b0;transform:scaleX(0.8995);">S</span>
<div style="left:0px;top:1004.7px;width:1920px;height:25.3px;background:#252525;"></div>
<svg style="left:2px;top:1007px;" width="24" height="19" viewBox="0 0 24 19"><g fill="#252525" stroke="#8c8c8c" stroke-width="1"><circle cx="8" cy="11.300" r="6.500"/><circle cx="14.900" cy="9.200" r="6.600"/></g><circle cx="8" cy="11.300" r="6" fill="#252525"/><circle cx="14.900" cy="9.200" r="6.100" fill="#252525"/><g fill="none" stroke="#8c8c8c" stroke-width="0.900"><path d="M12.500 9.500l-2-1.800A4.400 4.400 0 1 0 8 15.700c2 0 3.500-.2 5-.8"/><path d="M7.300 10.200l4.200 3.500c2 1.500 4.500 1.300 6.200-.3"/><path d="M11 6.800a4.400 4.400 0 0 1 7.400 5.200"/></g></svg>
<div style="left:0px;top:1030px;width:1920px;height:50px;background:linear-gradient(90deg,#30393b 0,#343b38 30%,#2f3a2c 50%,#2a3526 75%,#2a3424 100%);"></div>
<div style="left:0px;top:1030px;width:60px;height:50px;background:#363c41;"></div>
<svg style="left:19.7px;top:1044.8px;" width="21" height="21" viewBox="0 0 21 21"><path d="M0 2.900l8.300-1.100v8H0zM9.400 1.600L20.500 0v9.800H9.400zM0 10.900h8.300v8L0 17.700zM9.400 10.900h11.100v9.600L9.400 19z" fill="#fff"/></svg>
<div style="left:60px;top:1030px;width:430px;height:50px;background:#f2f2f2;border-bottom:1px solid #c6c6c6;border-top:1px solid #dcdcdc;"></div>
<svg style="left:74.7px;top:1042.8px;" width="24" height="24" viewBox="0 0 24 24"><circle cx="13.500" cy="9" r="6.300" fill="none" stroke="#1a1a1a" stroke-width="1.600"/><path d="M9 13.500L1.500 21" stroke="#1a1a1a" stroke-width="1.600"/></svg>
<span class="t " style="left:110.2px;top:1047.16px;font-size:18.6px;line-height:18.6px;color:#2b2b2b;transform:scaleX(1.0246);">Taper ici pour rechercher</span>
<svg style="left:508px;top:1043px;" width="24" height="24" viewBox="0 0 24 24"><circle cx="12" cy="12" r="8.300" fill="none" stroke="#fff" stroke-width="2.700"/></svg>
<svg style="left:569px;top:1044px;" width="22" height="21" viewBox="0 0 22 21"><g fill="none" stroke="#fff" stroke-width="1.500"><path d="M1.500 5.500h13v9.500h-13z"/><path d="M1.500 1.200v2h13v-2M1.500 19.500v-2h13v2"/><path d="M18.700 1v5.500M18.700 14.500V20"/></g><path d="M17.500 8.500h2.500v4h-2.500z" fill="#fff"/></svg>
<svg style="left:630.8px;top:1042px;" width="26" height="27" viewBox="0 0 28 29"><path d="M2 13C3 5.500 8 1.500 14.500 1.500c7.500 0 11.500 5 11.500 11.500v3.500H10c.3 4 3.500 6 7.500 6 3 0 5.500-.8 7.500-2v5.500c-2.500 1.300-5.500 2-8.500 2C8.500 28 4 23.500 4 17c0-3.500 2-6.500 5-8.500-1.500 1.800-2.200 3.500-2.300 5.500H18.500c0-3.500-2-6-5.500-6C8 8 4.500 10 2 13z" fill="#1183dc"/></svg>
<svg style="left:691.3px;top:1042.5px;" width="29" height="24.5" viewBox="0 0 31 26"><path d="M1 2.500h9l2.500 3H29v18H1z" fill="#e8b52c"/><path d="M1 6.500h28.500v17H1z" fill="#fbd765"/><path d="M7 15.500h16.500v8H7z" fill="#3b8fe0"/><path d="M10.500 19h9.500v4.500h-9.500z" fill="#fbd765"/></svg>
<svg style="left:753px;top:1040px;" width="31" height="30" viewBox="0 0 31 30"><defs><linearGradient id="mg" x1="0" y1="0" x2="0" y2="1"><stop offset="0" stop-color="#f2f2f2"/><stop offset="0.500" stop-color="#9a9a9a"/><stop offset="1" stop-color="#dcdcdc"/></linearGradient><linearGradient id="mb" x1="0" y1="0" x2="1" y2="1"><stop offset="0" stop-color="#35b7f2"/><stop offset="1" stop-color="#0b3c86"/></linearGradient></defs><rect x="1" y="1" width="29" height="27" rx="5" fill="url(#mg)"/><path d="M8 5.500L26 15 8 24.500z" fill="url(#mb)" stroke="#0a2a5a" stroke-width="0.800"/></svg>
<svg style="left:814.5px;top:1043.5px;" width="26" height="24.5" viewBox="0 0 29 27"><path d="M2 3.500L23 1.500l4.500 3V24l-5 2.500L2 24z" fill="#5ea6cf"/><path d="M23 1.500l4.500 3V24l-4.500 2.500z" fill="#8cc6e4"/><circle cx="12.500" cy="14" r="8" fill="#f08a1d"/><circle cx="12.500" cy="14" r="8" fill="none" stroke="#f6b56a" stroke-width="1"/><path d="M9.800 9.500l8 4.500-8 4.500z" fill="#fff"/></svg>
<svg style="left:876px;top:1039px;" width="31" height="31" viewBox="0 0 31 31"><defs><radialGradient id="fg" cx="0.600" cy="0.250" r="0.900"><stop offset="0" stop-color="#fff36b"/><stop offset="0.350" stop-color="#ff9a1f"/><stop offset="0.750" stop-color="#ff3a3a"/><stop offset="1" stop-color="#d81b78"/></radialGradient></defs><path d="M21 0.500c2 2.500 2.500 4.500 2.200 6.500C26.500 9 29.500 13 29.500 17.500c0 7.200-6 13-14 13s-14-5.800-14-13c0-3.500 1.200-6.500 3-8.500 0 1.500.3 2.500 1 3.500C6 9 8.500 6 12 5c-1 1.500-1 3-.5 4 2-3.500 5.500-4 7.500-3.500 1.500-1.500 2-3 2-5z" fill="url(#fg)"/><circle cx="16.500" cy="18" r="6.800" fill="#7a3fc4"/><path d="M9.500 17c1-3.500 4.500-5 8-4.500-3 .5-4 2.500-3.500 4.500s3 3.500 6.500 2c-1.500 3.500-5 4.500-8 3s-3.500-3-3-5z" fill="#ff8a1a"/></svg>
<div style="left:940px;top:1040.7px;width:27.8px;height:26.3px;background:#2a0033;border:2px solid #d870f0;"></div>
<span class="t " style="left:946.8px;top:1045.49px;font-size:17.5px;line-height:17.5px;color:#e77cf9;font-weight:700;transform:scaleX(0.9468);">Pr</span>
<div style="left:1001px;top:1040px;width:30.5px;height:29.5px;background:#0a0d14;border:1.500px solid #1e9de0;"></div>
<span class="t " style="left:1008.5px;top:1043.38px;font-size:22px;line-height:22px;color:#3aa8ee;transform:scaleX(1.0562);">V</span>
<div style="left:1021px;top:1060px;width:10px;height:9px;background:#1e9de0;"></div>
<span class="t " style="left:1022px;top:1061.23px;font-size:8px;line-height:8px;color:#fff;font-weight:700;transform:scaleX(0.8990);">17</span>
<div style="left:1048px;top:1030px;width:61px;height:50px;background:rgba(150,160,140,0.420);"></div>
<div style="left:1064px;top:1040.7px;width:27.8px;height:26.3px;background:#2a0033;border:2px solid #d870f0;"></div>
<span class="t " style="left:1070.8px;top:1045.49px;font-size:17.5px;line-height:17.5px;color:#e77cf9;font-weight:700;transform:scaleX(0.9468);">Pr</span>
<svg style="left:1125px;top:1040px;" width="32" height="32" viewBox="0 0 32 32"><circle cx="15" cy="15.500" r="12.500" fill="#27424a" stroke="#2fc7ad" stroke-width="2.600"/><path d="M9 9.500h8l4 3v5c0 3.500-3 5.500-6 6.500-3-1-6-3-6-6.500z" fill="none" stroke="#2fc7ad" stroke-width="1.600"/><circle cx="22" cy="22" r="8.300" fill="#ff9a3c"/><path d="M22 17.300l4.200 4.400h-2.600v4.300h-3.200v-4.300h-2.600z" fill="#fff"/></svg>
<div style="left:681px;top:1077px;width:51px;height:3px;background:#aee0f2;"></div>
<div style="left:867px;top:1077px;width:51px;height:3px;background:#aee0f2;"></div>
<div style="left:1048px;top:1077px;width:61px;height:3px;background:#aee0f2;"></div>
<div style="left:1115px;top:1077px;width:51px;height:3px;background:#aee0f2;"></div>
<svg style="left:1617px;top:1048px;" width="20" height="14" viewBox="0 0 20 14"><path d="M1.500 11.500l8.500-8 8.500 8" fill="none" stroke="#fff" stroke-width="1.500"/></svg>
<svg style="left:1649px;top:1044px;" width="16" height="23" viewBox="0 0 16 23"><rect x="4" y="0.800" width="8" height="13.500" rx="4" fill="#fff"/><path d="M1.500 10.500v1a6.500 6.500 0 0 0 13 0v-1M8 18v3.500M4.500 21.800h7" fill="none" stroke="#fff" stroke-width="1.300"/></svg>
<svg style="left:1679px;top:1046px;" width="19" height="19" viewBox="0 0 19 19"><g fill="none" stroke="#fff" stroke-width="1.300"><path d="M1.500 17.500A16 16 0 0 1 17.500 1.500"/><path d="M5.500 17.500A12 12 0 0 1 17.500 5.500" opacity="0.850"/><path d="M9.500 17.500A8 8 0 0 1 17.500 9.500"/></g><circle cx="15" cy="15.500" r="1.900" fill="#fff"/></svg>
<svg style="left:1705px;top:1046px;" width="24" height="20" viewBox="0 0 24 20"><path d="M1.500 6.500h4l5-4.500v15.500l-5-4.500h-4z" fill="none" stroke="#fff" stroke-width="1.300"/><path d="M13 7c1.300 1.800 1.300 4 0 6M16 4.500c2.500 3 2.500 8 0 11" fill="none" stroke="#fff" stroke-width="1.200"/><path d="M19.500 2c3.500 4.500 3.500 11.500 0 16" fill="none" stroke="#9aa39a" stroke-width="1"/></svg>
<svg style="left:1736px;top:1047px;" width="23" height="16" viewBox="0 0 23 16"><rect x="5" y="3.500" width="15" height="10.500" fill="none" stroke="#fff" stroke-width="1.300"/><path d="M20.500 6.500h1.800v4.500h-1.800z" fill="#fff"/><rect x="7" y="5.500" width="11" height="6.500" fill="#fff"/><path d="M1.500 0.500v2.500M4.500 0.500v2.500M0.500 3h5v2.500c0 1-1 2-2.500 2S.5 6.500.5 5.500zM3 7.500v5h2.500" fill="none" stroke="#fff" stroke-width="1.100"/></svg>
<span class="t " style="left:1791px;top:1036.04px;font-size:14.6px;line-height:14.6px;color:#fff;transform:scaleX(0.9142);">15:37</span>
<span class="t " style="left:1771px;top:1058.94px;font-size:14.6px;line-height:14.6px;color:#fff;transform:scaleX(1.0182);">15/04/2020</span>
<svg style="left:1868px;top:1044px;" width="32" height="32" viewBox="0 0 32 32"><path d="M1.500 1.500h19v14.500H9l-4 4.500v-4.500H1.500z" fill="#fff"/><path d="M5 5.500h12M5 8.500h12M5 11.500h12" stroke="#2c3628" stroke-width="1"/><circle cx="20" cy="20.500" r="9.300" fill="#2b2d2b" stroke="#7c7f7c" stroke-width="1.200"/></svg>
<span class="t " style="left:1884.8px;top:1058.23px;font-size:14.5px;line-height:14.5px;color:#fff;transform:scaleX(0.8060);">1</span>
<div style="left:1914px;top:1030px;width:1px;height:50px;background:#7a7f78;"></div>
<svg style="left:0;top:0;pointer-events:none" width="1920" height="1080" viewBox="0 0 1920 1080"><g fill="none" stroke="#ed1c24" stroke-linecap="round" stroke-linejoin="round"><g stroke-width="7.600"><path d="M580.6 346.3C579.2 345.4 574.4 343.8 572.2 340.7C570.0 337.6 568.4 333.6 567.6 327.8C566.8 322.0 566.5 312.4 567.6 305.6C568.7 298.8 570.9 291.9 574.1 287.0C577.3 282.1 581.8 279.0 587.0 275.9C592.2 272.8 599.4 269.8 605.6 268.5C611.8 267.2 617.9 266.6 624.1 268.1C630.3 269.7 637.4 274.0 642.6 277.8C647.9 281.6 652.2 286.1 655.6 290.7C659.0 295.3 661.5 301.0 663.0 305.6C664.5 310.2 665.1 313.9 664.8 318.5C664.5 323.1 662.8 329.0 661.1 333.3C659.4 337.6 657.7 340.7 654.6 344.4C651.5 348.1 646.5 352.1 642.6 355.6C638.8 359.2 634.0 362.8 631.5 365.7C629.0 368.6 628.1 369.9 627.8 373.1C627.5 376.4 628.4 381.0 629.6 385.2C630.8 389.4 634.3 396.0 635.2 398.1"/><path d="M776.9 310.7C775.6 309.5 771.3 306.4 769.1 303.3C766.9 300.2 764.4 295.4 763.5 292.2C762.6 289.0 762.3 287.6 763.5 283.9C764.7 280.2 768.1 274.8 770.9 270.0C773.7 265.2 776.5 259.8 780.2 255.2C783.9 250.6 788.5 245.2 793.1 242.2C797.7 239.2 803.7 237.9 808.0 237.0C812.3 236.1 815.7 236.0 819.1 237.0C822.5 238.0 825.5 240.1 828.3 243.1C831.1 246.1 834.0 250.1 835.7 255.2C837.4 260.3 838.2 267.2 838.5 273.7C838.8 280.2 838.7 287.6 837.6 294.1C836.5 300.6 834.8 306.7 832.0 312.6C829.2 318.5 824.9 324.4 820.9 329.3C816.9 334.2 811.7 338.8 808.0 342.2C804.3 345.6 800.5 347.1 798.7 349.6C796.9 352.1 797.5 355.8 797.2 357.0"/><path d="M971.9 251.1C971.6 249.7 969.8 245.1 970.4 242.8C971.0 240.5 971.6 239.1 975.6 237.2C979.6 235.3 987.9 232.5 994.1 231.3C1000.3 230.1 1007.4 230.0 1012.6 230.2C1017.9 230.4 1021.3 230.5 1025.6 232.6C1029.9 234.7 1035.1 238.3 1038.5 242.8C1041.9 247.3 1044.4 253.5 1045.9 259.4C1047.5 265.3 1048.1 271.8 1047.8 278.0C1047.5 284.2 1046.9 290.6 1044.1 296.5C1041.3 302.4 1036.7 308.5 1031.1 313.1C1025.5 317.7 1017.5 321.5 1010.7 324.3C1003.9 327.1 996.9 328.5 990.4 329.8C983.9 331.1 976.4 330.8 971.9 332.0C967.4 333.2 965.7 334.5 963.5 337.2C961.3 339.9 959.3 346.4 958.5 348.3"/></g><path d="M651.500 427.300L649.500 432.800" stroke-width="11.500"/><path d="M792.200 395L796.900 402.400" stroke-width="8.500"/><path d="M942.300 380.500L940.800 386" stroke-width="14"/><path d="M940.500 387L935.300 395.300" stroke-width="9"/><g stroke-width="5"><path d="M1014.300 406.300H1037.800V444.700H1049.300L1026 481 1003 444.700H1014.300Z"/><path d="M1807.500 397.200H1828.600V441.700H1837.800L1818 484.500 1798.300 441.700H1807.500Z"/><path d="M668.400 557.200H686.200V613.900H695L677 668 659.800 613.900H668.400Z"/><path d="M1161.800 496H1187.800V590.600H1200L1174.300 681 1149.800 590.600H1161.800Z"/><ellipse cx="1022.600" cy="507.200" rx="40.600" ry="20.200"/><ellipse cx="1809.300" cy="506.900" rx="44.300" ry="14.500"/><ellipse cx="681.450" cy="690" rx="40.900" ry="19.400"/><ellipse cx="1055.900" cy="695.750" rx="35.400" ry="17.750"/><ellipse cx="1179.450" cy="700.800" rx="40.350" ry="17.400"/></g></g></svg>
</body></html>
